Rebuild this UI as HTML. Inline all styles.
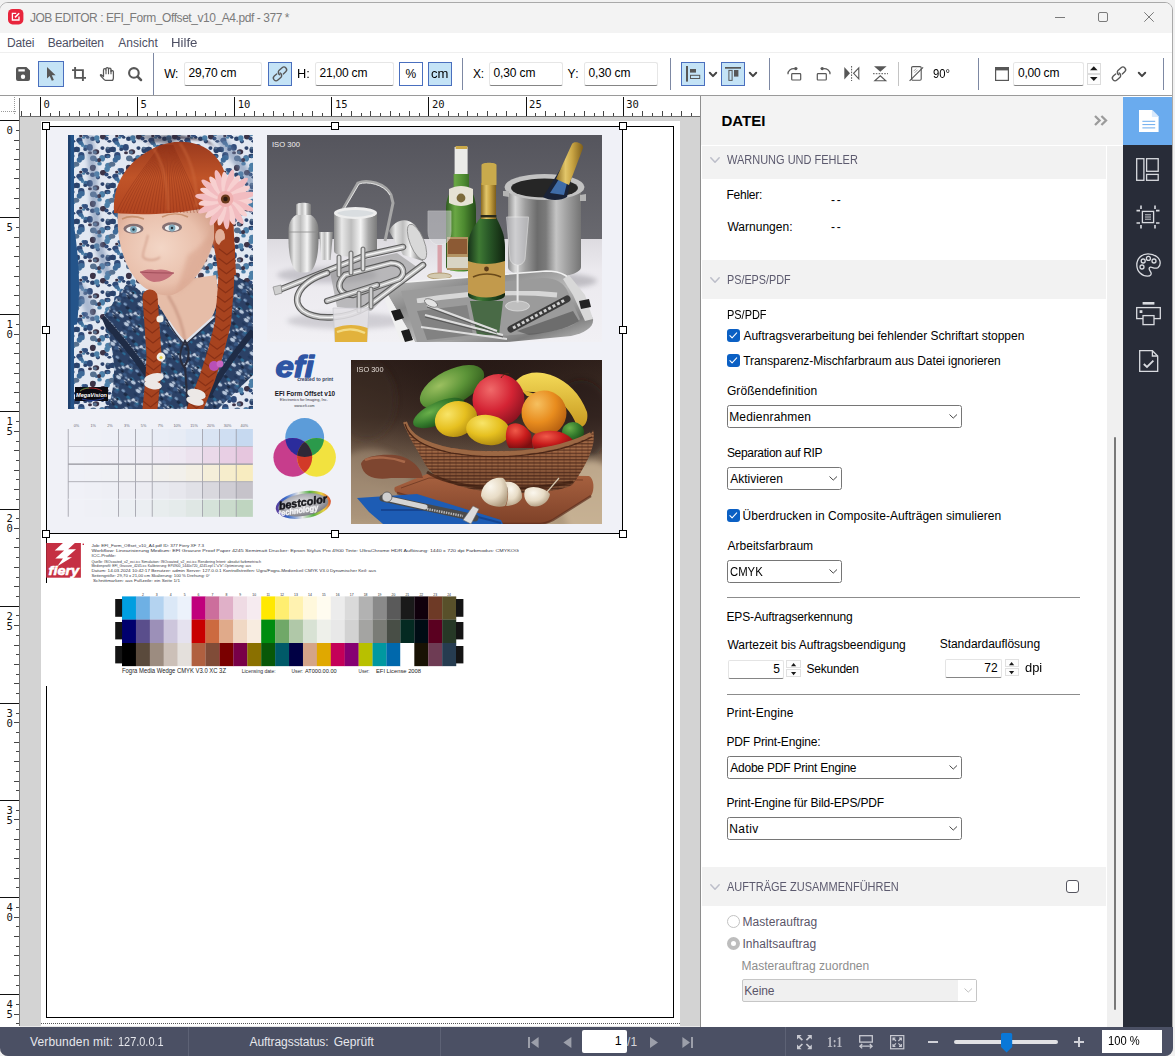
<!DOCTYPE html>
<html lang="de"><head><meta charset="utf-8"><title>JOB EDITOR : EFI_Form_Offset_v10_A4.pdf - 377 *</title>
<style>
html,body{margin:0;padding:0;overflow:hidden}
body{width:1175px;height:1056px;position:relative;overflow:hidden;background:#f1f1f1;font-family:"Liberation Sans",sans-serif;font-size:12px}
.a{position:absolute;display:block}
.t{position:absolute;white-space:pre;display:block}
svg{overflow:visible}
</style></head>
<body>
<div class="a" style="left:0px;top:0px;width:1175px;height:1056px;background:#f1f1f1;"></div>
<div class="a" style="left:-1px;top:2px;width:1173.5px;height:1054px;background:#fff;border:1px solid #a9a9a9;border-radius:9px 8px 8px 9px;box-sizing:border-box;overflow:hidden;"></div>
<div class="a" style="left:0px;top:3px;width:1171.5px;height:30px;background:#f3f3f3;border-radius:8px 7px 0 0;"></div>
<svg class="a" style="left:8.4px;top:9.2px;" width="15.4" height="15.4" viewBox="0 0 15.4 15.4"><rect x="0" y="0" width="15.4" height="15.4" rx="4.6" fill="#e8253c"/><path d="M8.2 4.4H4.4V11H11V7.4" fill="none" stroke="#fff" stroke-width="1.3"/><path d="M7 8.4L11.2 4.2" stroke="#fff" stroke-width="1.5"/></svg>
<span class="t" style="left:29.91px;top:11.84px;font-size:12px;line-height:12px;color:#7b7b7b;letter-spacing:-0.437px;">JOB EDITOR : EFI_Form_Offset_v10_A4.pdf - 377 *</span>
<div class="a" style="left:1055px;top:17px;width:10px;height:1px;background:#7a7a7a;"></div>
<div class="a" style="left:1098px;top:12px;width:10px;height:10px;border:1px solid #7a7a7a;border-radius:2px;box-sizing:border-box;"></div>
<svg class="a" style="left:1144px;top:12px;" width="10" height="10" viewBox="0 0 10 10"><path d="M0.3 0.3L9.7 9.7M9.7 0.3L0.3 9.7" stroke="#7a7a7a" stroke-width="1"/></svg>
<div class="a" style="left:0px;top:33px;width:1171.5px;height:19px;background:#fff;"></div>
<span class="t" style="left:7.02px;top:37.14px;font-size:12px;line-height:12px;color:#4d4f63;letter-spacing:-0.131px;">Datei</span>
<span class="t" style="left:47.82px;top:37.14px;font-size:12px;line-height:12px;color:#4d4f63;letter-spacing:-0.209px;">Bearbeiten</span>
<span class="t" style="left:118.18px;top:37.14px;font-size:12px;line-height:12px;color:#4d4f63;letter-spacing:0.059px;">Ansicht</span>
<span class="t" style="left:171.21px;top:37.14px;font-size:12px;line-height:12px;color:#4d4f63;transform:scaleX(1.1023);transform-origin:0 0;">Hilfe</span>
<div class="a" style="left:0px;top:52px;width:1171.5px;height:1px;background:#efefef;"></div>
<div class="a" style="left:0px;top:53px;width:1171.5px;height:42px;background:#fff;"></div>
<div class="a" style="left:0px;top:95px;width:1171.5px;height:1px;background:#9a9a9a;"></div>
<svg class="a" style="left:16px;top:67px;" width="14" height="14" viewBox="0 0 14 14"><path fill="#575757" fill-rule="evenodd" d="M2 0h8.4L14 3.4V12A2 2 0 0 1 12 14H2A2 2 0 0 1 0 12V2A2 2 0 0 1 2 0zM2.4 2.2v2.3h6.4V2.2zM7 7.5a2.2 2.2 0 1 0 0 4.4a2.2 2.2 0 0 0 0-4.4z"/></svg>
<div class="a" style="left:38px;top:61px;width:26px;height:26px;background:#c4e3f6;border:1px solid #4a6fbe;box-sizing:border-box;"></div>
<svg class="a" style="left:46.5px;top:67px;" width="9" height="14" viewBox="0 0 9 14"><path fill="#575757" d="M0 0V11.6L2.7 9L4.8 13.8L6.9 12.9L4.8 8.2H8.6Z"/></svg>
<svg class="a" style="left:72px;top:67px;" width="14" height="14" viewBox="0 0 14 14"><path d="M3.1 0V10.9H14M0 3.1H10.9V14" fill="none" stroke="#575757" stroke-width="1.9"/></svg>
<svg class="a" style="left:100px;top:67px;" width="14" height="14" viewBox="0 0 14 14"><path d="M0.9 7.5L3.5 9.6V2.9A1.25 1.25 0 0 1 6 2.9V1.8A1.25 1.25 0 0 1 8.5 1.8V2.4A1.25 1.25 0 0 1 11 2.4V4.6A1.25 1.25 0 0 1 13.4 4.6V10.4C13.4 12.4 12.8 13.4 11.8 13.4H5.6C4.8 13.4 4.3 13 3.7 12.2L0.7 8.8C0.2 8 0.4 7.5 0.9 7.5Z" fill="none" stroke="#575757" stroke-width="1.25" stroke-linejoin="round"/><path d="M6 2.9V7.2M8.5 1.8V7.2M11 2.4V7.2" stroke="#575757" stroke-width="1.1"/></svg>
<svg class="a" style="left:128px;top:67px;" width="14" height="14" viewBox="0 0 14 14"><circle cx="5.9" cy="5.9" r="4.8" fill="none" stroke="#575757" stroke-width="2.1"/><path d="M9.6 9.6L13 13" stroke="#575757" stroke-width="2.5" stroke-linecap="round"/></svg>
<div class="a" style="left:153px;top:53px;width:1px;height:42px;background:#7d88a3;"></div>
<span class="t" style="left:164.25px;top:67.64px;font-size:12px;line-height:12px;color:#000;letter-spacing:-0.405px;">W:</span>
<div class="a" style="left:183.8px;top:62px;width:78.7px;height:24px;background:#fff;border:1px solid #e6e6e6;border-bottom:1px solid #858585;border-radius:2.5px;box-sizing:border-box;"></div>
<span class="t" style="left:188.60px;top:66.64px;font-size:12px;line-height:12px;color:#000;letter-spacing:-0.224px;">29,70 cm</span>
<div class="a" style="left:268px;top:62px;width:24px;height:24px;background:#c4e3f6;border:1px solid #4a6fbe;box-sizing:border-box;"></div>
<svg class="a" style="left:273px;top:67px;" width="14" height="14" viewBox="0 0 14 14"><g fill="none" stroke="#575757" stroke-width="1.35" stroke-linecap="round"><g transform="translate(9.4 4.1) rotate(-42)"><path d="M-2.2 -2.7H2A2.7 2.7 0 0 1 2 2.7H-1.2M-4.3 1.2A2.7 2.7 0 0 1 -2.2 -2.7"/></g><g transform="translate(4.6 9.7) rotate(-42)"><path d="M2.2 2.7H-2A2.7 2.7 0 0 1 -2 -2.7H1.2M4.3 -1.2A2.7 2.7 0 0 1 2.2 2.7"/></g></g></svg>
<span class="t" style="left:296.75px;top:67.64px;font-size:12px;line-height:12px;color:#000;transform:scaleX(1.0686);transform-origin:0 0;">H:</span>
<div class="a" style="left:314.5px;top:62px;width:79px;height:24px;background:#fff;border:1px solid #e6e6e6;border-bottom:1px solid #858585;border-radius:2.5px;box-sizing:border-box;"></div>
<span class="t" style="left:319.60px;top:66.64px;font-size:12px;line-height:12px;color:#000;letter-spacing:-0.224px;">21,00 cm</span>
<div class="a" style="left:399px;top:62px;width:24px;height:24px;background:#fff;border:1px solid #4a6fbe;box-sizing:border-box;"></div>
<span class="t" style="left:405.57px;top:67.94px;font-size:12px;line-height:12px;color:#000;">%</span>
<div class="a" style="left:428px;top:62px;width:24px;height:24px;background:#c4e3f6;border:1px solid #4a6fbe;box-sizing:border-box;"></div>
<span class="t" style="left:430.95px;top:67.94px;font-size:12px;line-height:12px;color:#000;transform:scaleX(1.0885);transform-origin:0 0;">cm</span>
<div class="a" style="left:462px;top:58px;width:1px;height:32px;background:#7d88a3;"></div>
<span class="t" style="left:472.93px;top:67.64px;font-size:12px;line-height:12px;color:#000;letter-spacing:-0.179px;">X:</span>
<div class="a" style="left:488.5px;top:62px;width:74px;height:24px;background:#fff;border:1px solid #e6e6e6;border-bottom:1px solid #858585;border-radius:2.5px;box-sizing:border-box;"></div>
<span class="t" style="left:493.43px;top:66.64px;font-size:12px;line-height:12px;color:#000;letter-spacing:-0.121px;">0,30 cm</span>
<span class="t" style="left:567.54px;top:67.64px;font-size:12px;line-height:12px;color:#000;letter-spacing:0.372px;">Y:</span>
<div class="a" style="left:583.5px;top:62px;width:74px;height:24px;background:#fff;border:1px solid #e6e6e6;border-bottom:1px solid #858585;border-radius:2.5px;box-sizing:border-box;"></div>
<span class="t" style="left:588.43px;top:66.64px;font-size:12px;line-height:12px;color:#000;letter-spacing:-0.121px;">0,30 cm</span>
<div class="a" style="left:670px;top:58px;width:1px;height:32px;background:#7d88a3;"></div>
<div class="a" style="left:681px;top:62px;width:24px;height:24px;background:#c4e3f6;border:1px solid #4a6fbe;box-sizing:border-box;"></div>
<svg class="a" style="left:685px;top:65px;" width="18" height="18" viewBox="0 0 18 18"><rect x="1" y="1" width="2" height="15.6" fill="#575757"/><rect x="5" y="4" width="6" height="3.6" fill="#575757"/><rect x="5.5" y="10.3" width="9.2" height="3.2" fill="none" stroke="#575757" stroke-width="1"/></svg>
<svg class="a" style="left:709px;top:71.5px;" width="8" height="5" viewBox="0 0 8 5"><path d="M0.8 0.8 L4 4.1 L7.2 0.8" fill="none" stroke="#444" stroke-width="2" stroke-linecap="round" stroke-linejoin="round"/></svg>
<div class="a" style="left:721px;top:62px;width:24px;height:24px;background:#c4e3f6;border:1px solid #4a6fbe;box-sizing:border-box;"></div>
<svg class="a" style="left:724px;top:65px;" width="18" height="18" viewBox="0 0 18 18"><rect x="1" y="2" width="16" height="1.7" fill="#575757"/><rect x="4.9" y="5.4" width="3.2" height="10" fill="none" stroke="#575757" stroke-width="1"/><rect x="10" y="5" width="4.4" height="6.6" fill="#575757"/></svg>
<svg class="a" style="left:749px;top:71.5px;" width="8" height="5" viewBox="0 0 8 5"><path d="M0.8 0.8 L4 4.1 L7.2 0.8" fill="none" stroke="#444" stroke-width="2" stroke-linecap="round" stroke-linejoin="round"/></svg>
<div class="a" style="left:769px;top:58px;width:1px;height:32px;background:#7d88a3;"></div>
<svg class="a" style="left:786.5px;top:66px;" width="15" height="15" viewBox="0 0 15 15"><rect x="4.7" y="7.6" width="9" height="6.4" rx="0.8" fill="none" stroke="#575757" stroke-width="1.2"/><path d="M1 8.2C0.6 4.4 4 2.4 7.6 2.6" fill="none" stroke="#575757" stroke-width="1.2"/><circle cx="8.8" cy="2.6" r="1.7" fill="#575757"/></svg>
<svg class="a" style="left:815.5px;top:66px;" width="15" height="15" viewBox="0 0 15 15"><rect x="1.3" y="7.6" width="9" height="6.4" rx="0.8" fill="none" stroke="#575757" stroke-width="1.2"/><path d="M14 8.2C14.4 4.4 11 2.4 7.4 2.6" fill="none" stroke="#575757" stroke-width="1.2"/><circle cx="6.2" cy="2.6" r="1.7" fill="#575757"/></svg>
<svg class="a" style="left:844px;top:66px;" width="16" height="15" viewBox="0 0 16 15"><path d="M0.3 1V13.6L6 7.3Z" fill="#575757"/><path d="M14.8 1.8V12.8L9.6 7.3Z" fill="none" stroke="#575757" stroke-width="1.1"/><path d="M7.6 0V15" stroke="#575757" stroke-width="1" stroke-dasharray="1.6 1.2"/></svg>
<svg class="a" style="left:873px;top:65.5px;" width="15" height="16" viewBox="0 0 15 16"><path d="M1 0.3H13.6L7.3 5.8Z" fill="#575757"/><path d="M1.8 14.8H12.8L7.3 9.8Z" fill="none" stroke="#575757" stroke-width="1.1"/><path d="M0 7.7H15" stroke="#575757" stroke-width="1" stroke-dasharray="1.6 1.2"/></svg>
<div class="a" style="left:898px;top:62px;width:1px;height:24px;background:#c4c4c4;"></div>
<svg class="a" style="left:908.5px;top:66px;" width="15" height="16" viewBox="0 0 15 16"><rect x="2.6" y="0.6" width="9.6" height="13.6" rx="1.2" fill="none" stroke="#575757" stroke-width="1.1"/><path d="M0.6 14.9L14.1 1.4" stroke="#575757" stroke-width="1.2"/><path d="M4.6 5.2L7.2 2.6M5.6 6.8L8.6 3.8" stroke="#8a8a8a" stroke-width="0.8"/></svg>
<span class="t" style="left:932.57px;top:67.94px;font-size:12px;line-height:12px;color:#000;transform:scaleX(0.9364);transform-origin:0 0;">90°</span>
<div class="a" style="left:978px;top:58px;width:1px;height:32px;background:#7d88a3;"></div>
<svg class="a" style="left:995px;top:67px;" width="14" height="14" viewBox="0 0 14 14"><rect x="0.6" y="0.6" width="12.8" height="12.8" fill="none" stroke="#575757" stroke-width="1.2"/><rect x="0" y="0" width="14" height="3.4" fill="#575757"/></svg>
<div class="a" style="left:1012.5px;top:62px;width:71.5px;height:24px;background:#fff;border:1px solid #e6e6e6;border-bottom:1px solid #858585;border-radius:2.5px;box-sizing:border-box;"></div>
<span class="t" style="left:1017.93px;top:66.64px;font-size:12px;line-height:12px;color:#000;letter-spacing:-0.205px;">0,00 cm</span>
<div class="a" style="left:1086.5px;top:63px;width:14.5px;height:11px;border:1px solid #dcdcdc;box-sizing:border-box;background:#fdfdfd;"></div>
<div class="a" style="left:1086.5px;top:74px;width:14.5px;height:11px;border:1px solid #dcdcdc;box-sizing:border-box;background:#fdfdfd;"></div>
<svg class="a" style="left:1090px;top:66.3px;" width="7.6" height="4.2" viewBox="0 0 7.6 4.2"><path d="M0 4.2L3.8 0.2L7.6 4.2Z" fill="#1a1a1a"/></svg>
<svg class="a" style="left:1090px;top:77.3px;" width="7.6" height="4.2" viewBox="0 0 7.6 4.2"><path d="M0 0L3.8 4L7.6 0Z" fill="#1a1a1a"/></svg>
<svg class="a" style="left:1112px;top:67px;" width="14" height="14" viewBox="0 0 14 14"><g fill="none" stroke="#575757" stroke-width="1.35" stroke-linecap="round"><g transform="translate(9.4 4.1) rotate(-42)"><path d="M-2.2 -2.7H2A2.7 2.7 0 0 1 2 2.7H-1.2M-4.3 1.2A2.7 2.7 0 0 1 -2.2 -2.7"/></g><g transform="translate(4.6 9.7) rotate(-42)"><path d="M2.2 2.7H-2A2.7 2.7 0 0 1 -2 -2.7H1.2M4.3 -1.2A2.7 2.7 0 0 1 2.2 2.7"/></g></g></svg>
<svg class="a" style="left:1138px;top:71.5px;" width="8" height="5" viewBox="0 0 8 5"><path d="M0.8 0.8 L4 4.1 L7.2 0.8" fill="none" stroke="#444" stroke-width="2" stroke-linecap="round" stroke-linejoin="round"/></svg>
<div class="a" style="left:1163px;top:58px;width:1px;height:32px;background:#7d88a3;"></div>
<div class="a" style="left:0px;top:96px;width:700px;height:20px;background:#fff;"></div>
<div class="a" style="left:0px;top:117px;width:19px;height:910px;background:#fff;"></div>
<svg class="a" style="left:0;top:96px" width="700" height="22" viewBox="0 96 700 22" shape-rendering="crispEdges"><rect x="20" y="116" width="680" height="1" fill="#6e6e6e"/><rect x="19" y="98" width="1" height="19" fill="#747474"/><path d="M0.5 111.5H17M14.5 97V114" stroke="#9a9a9a" stroke-width="1" stroke-dasharray="1 1" fill="none"/><rect x="21" y="111" width="1" height="5" fill="#444"/><rect x="30" y="113" width="1" height="3" fill="#444"/><rect x="40" y="97" width="1" height="19" fill="#111"/><rect x="50" y="113" width="1" height="3" fill="#444"/><rect x="59" y="111" width="1" height="5" fill="#444"/><rect x="69" y="113" width="1" height="3" fill="#444"/><rect x="79" y="111" width="1" height="5" fill="#444"/><rect x="89" y="113" width="1" height="3" fill="#444"/><rect x="98" y="111" width="1" height="5" fill="#444"/><rect x="108" y="113" width="1" height="3" fill="#444"/><rect x="118" y="111" width="1" height="5" fill="#444"/><rect x="127" y="113" width="1" height="3" fill="#444"/><rect x="137" y="97" width="1" height="19" fill="#111"/><rect x="147" y="113" width="1" height="3" fill="#444"/><rect x="157" y="111" width="1" height="5" fill="#444"/><rect x="166" y="113" width="1" height="3" fill="#444"/><rect x="176" y="111" width="1" height="5" fill="#444"/><rect x="186" y="113" width="1" height="3" fill="#444"/><rect x="195" y="111" width="1" height="5" fill="#444"/><rect x="205" y="113" width="1" height="3" fill="#444"/><rect x="215" y="111" width="1" height="5" fill="#444"/><rect x="225" y="113" width="1" height="3" fill="#444"/><rect x="234" y="97" width="1" height="19" fill="#111"/><rect x="244" y="113" width="1" height="3" fill="#444"/><rect x="254" y="111" width="1" height="5" fill="#444"/><rect x="263" y="113" width="1" height="3" fill="#444"/><rect x="273" y="111" width="1" height="5" fill="#444"/><rect x="283" y="113" width="1" height="3" fill="#444"/><rect x="293" y="111" width="1" height="5" fill="#444"/><rect x="302" y="113" width="1" height="3" fill="#444"/><rect x="312" y="111" width="1" height="5" fill="#444"/><rect x="322" y="113" width="1" height="3" fill="#444"/><rect x="331" y="97" width="1" height="19" fill="#111"/><rect x="341" y="113" width="1" height="3" fill="#444"/><rect x="351" y="111" width="1" height="5" fill="#444"/><rect x="361" y="113" width="1" height="3" fill="#444"/><rect x="370" y="111" width="1" height="5" fill="#444"/><rect x="380" y="113" width="1" height="3" fill="#444"/><rect x="390" y="111" width="1" height="5" fill="#444"/><rect x="399" y="113" width="1" height="3" fill="#444"/><rect x="409" y="111" width="1" height="5" fill="#444"/><rect x="419" y="113" width="1" height="3" fill="#444"/><rect x="428" y="97" width="1" height="19" fill="#111"/><rect x="438" y="113" width="1" height="3" fill="#444"/><rect x="448" y="111" width="1" height="5" fill="#444"/><rect x="458" y="113" width="1" height="3" fill="#444"/><rect x="467" y="111" width="1" height="5" fill="#444"/><rect x="477" y="113" width="1" height="3" fill="#444"/><rect x="487" y="111" width="1" height="5" fill="#444"/><rect x="496" y="113" width="1" height="3" fill="#444"/><rect x="506" y="111" width="1" height="5" fill="#444"/><rect x="516" y="113" width="1" height="3" fill="#444"/><rect x="526" y="97" width="1" height="19" fill="#111"/><rect x="535" y="113" width="1" height="3" fill="#444"/><rect x="545" y="111" width="1" height="5" fill="#444"/><rect x="555" y="113" width="1" height="3" fill="#444"/><rect x="564" y="111" width="1" height="5" fill="#444"/><rect x="574" y="113" width="1" height="3" fill="#444"/><rect x="584" y="111" width="1" height="5" fill="#444"/><rect x="594" y="113" width="1" height="3" fill="#444"/><rect x="603" y="111" width="1" height="5" fill="#444"/><rect x="613" y="113" width="1" height="3" fill="#444"/><rect x="623" y="97" width="1" height="19" fill="#111"/><rect x="632" y="113" width="1" height="3" fill="#444"/><rect x="642" y="111" width="1" height="5" fill="#444"/><rect x="652" y="113" width="1" height="3" fill="#444"/><rect x="662" y="111" width="1" height="5" fill="#444"/><rect x="671" y="113" width="1" height="3" fill="#444"/><rect x="681" y="111" width="1" height="5" fill="#444"/><rect x="691" y="113" width="1" height="3" fill="#444"/></svg>
<span class="t" style="left:43.50px;top:98.61px;font-size:10.5px;line-height:10.5px;color:#111;font-family:'DejaVu Sans Mono','Liberation Mono',monospace;">0</span>
<span class="t" style="left:140.62px;top:98.61px;font-size:10.5px;line-height:10.5px;color:#111;font-family:'DejaVu Sans Mono','Liberation Mono',monospace;">5</span>
<span class="t" style="left:237.75px;top:98.61px;font-size:10.5px;line-height:10.5px;color:#111;font-family:'DejaVu Sans Mono','Liberation Mono',monospace;">10</span>
<span class="t" style="left:334.88px;top:98.61px;font-size:10.5px;line-height:10.5px;color:#111;font-family:'DejaVu Sans Mono','Liberation Mono',monospace;">15</span>
<span class="t" style="left:432.00px;top:98.61px;font-size:10.5px;line-height:10.5px;color:#111;font-family:'DejaVu Sans Mono','Liberation Mono',monospace;">20</span>
<span class="t" style="left:529.12px;top:98.61px;font-size:10.5px;line-height:10.5px;color:#111;font-family:'DejaVu Sans Mono','Liberation Mono',monospace;">25</span>
<span class="t" style="left:626.25px;top:98.61px;font-size:10.5px;line-height:10.5px;color:#111;font-family:'DejaVu Sans Mono','Liberation Mono',monospace;">30</span>
<svg class="a" style="left:0;top:117px" width="21" height="909" viewBox="0 117 21 909" shape-rendering="crispEdges"><rect x="19" y="117" width="1" height="909" fill="#747474"/><rect x="0" y="120" width="19" height="1" fill="#111"/><rect x="16" y="130" width="3" height="1" fill="#444"/><rect x="14" y="140" width="5" height="1" fill="#444"/><rect x="16" y="149" width="3" height="1" fill="#444"/><rect x="14" y="159" width="5" height="1" fill="#444"/><rect x="16" y="169" width="3" height="1" fill="#444"/><rect x="14" y="178" width="5" height="1" fill="#444"/><rect x="16" y="188" width="3" height="1" fill="#444"/><rect x="14" y="198" width="5" height="1" fill="#444"/><rect x="16" y="208" width="3" height="1" fill="#444"/><rect x="0" y="217" width="19" height="1" fill="#111"/><rect x="16" y="227" width="3" height="1" fill="#444"/><rect x="14" y="237" width="5" height="1" fill="#444"/><rect x="16" y="246" width="3" height="1" fill="#444"/><rect x="14" y="256" width="5" height="1" fill="#444"/><rect x="16" y="266" width="3" height="1" fill="#444"/><rect x="14" y="276" width="5" height="1" fill="#444"/><rect x="16" y="285" width="3" height="1" fill="#444"/><rect x="14" y="295" width="5" height="1" fill="#444"/><rect x="16" y="305" width="3" height="1" fill="#444"/><rect x="0" y="314" width="19" height="1" fill="#111"/><rect x="16" y="324" width="3" height="1" fill="#444"/><rect x="14" y="334" width="5" height="1" fill="#444"/><rect x="16" y="343" width="3" height="1" fill="#444"/><rect x="14" y="353" width="5" height="1" fill="#444"/><rect x="16" y="363" width="3" height="1" fill="#444"/><rect x="14" y="373" width="5" height="1" fill="#444"/><rect x="16" y="382" width="3" height="1" fill="#444"/><rect x="14" y="392" width="5" height="1" fill="#444"/><rect x="16" y="402" width="3" height="1" fill="#444"/><rect x="0" y="411" width="19" height="1" fill="#111"/><rect x="16" y="421" width="3" height="1" fill="#444"/><rect x="14" y="431" width="5" height="1" fill="#444"/><rect x="16" y="441" width="3" height="1" fill="#444"/><rect x="14" y="450" width="5" height="1" fill="#444"/><rect x="16" y="460" width="3" height="1" fill="#444"/><rect x="14" y="470" width="5" height="1" fill="#444"/><rect x="16" y="479" width="3" height="1" fill="#444"/><rect x="14" y="489" width="5" height="1" fill="#444"/><rect x="16" y="499" width="3" height="1" fill="#444"/><rect x="0" y="509" width="19" height="1" fill="#111"/><rect x="16" y="518" width="3" height="1" fill="#444"/><rect x="14" y="528" width="5" height="1" fill="#444"/><rect x="16" y="538" width="3" height="1" fill="#444"/><rect x="14" y="547" width="5" height="1" fill="#444"/><rect x="16" y="557" width="3" height="1" fill="#444"/><rect x="14" y="567" width="5" height="1" fill="#444"/><rect x="16" y="577" width="3" height="1" fill="#444"/><rect x="14" y="586" width="5" height="1" fill="#444"/><rect x="16" y="596" width="3" height="1" fill="#444"/><rect x="0" y="606" width="19" height="1" fill="#111"/><rect x="16" y="615" width="3" height="1" fill="#444"/><rect x="14" y="625" width="5" height="1" fill="#444"/><rect x="16" y="635" width="3" height="1" fill="#444"/><rect x="14" y="645" width="5" height="1" fill="#444"/><rect x="16" y="654" width="3" height="1" fill="#444"/><rect x="14" y="664" width="5" height="1" fill="#444"/><rect x="16" y="674" width="3" height="1" fill="#444"/><rect x="14" y="683" width="5" height="1" fill="#444"/><rect x="16" y="693" width="3" height="1" fill="#444"/><rect x="0" y="703" width="19" height="1" fill="#111"/><rect x="16" y="713" width="3" height="1" fill="#444"/><rect x="14" y="722" width="5" height="1" fill="#444"/><rect x="16" y="732" width="3" height="1" fill="#444"/><rect x="14" y="742" width="5" height="1" fill="#444"/><rect x="16" y="751" width="3" height="1" fill="#444"/><rect x="14" y="761" width="5" height="1" fill="#444"/><rect x="16" y="771" width="3" height="1" fill="#444"/><rect x="14" y="781" width="5" height="1" fill="#444"/><rect x="16" y="790" width="3" height="1" fill="#444"/><rect x="0" y="800" width="19" height="1" fill="#111"/><rect x="16" y="810" width="3" height="1" fill="#444"/><rect x="14" y="819" width="5" height="1" fill="#444"/><rect x="16" y="829" width="3" height="1" fill="#444"/><rect x="14" y="839" width="5" height="1" fill="#444"/><rect x="16" y="849" width="3" height="1" fill="#444"/><rect x="14" y="858" width="5" height="1" fill="#444"/><rect x="16" y="868" width="3" height="1" fill="#444"/><rect x="14" y="878" width="5" height="1" fill="#444"/><rect x="16" y="887" width="3" height="1" fill="#444"/><rect x="0" y="897" width="19" height="1" fill="#111"/><rect x="16" y="907" width="3" height="1" fill="#444"/><rect x="14" y="917" width="5" height="1" fill="#444"/><rect x="16" y="926" width="3" height="1" fill="#444"/><rect x="14" y="936" width="5" height="1" fill="#444"/><rect x="16" y="946" width="3" height="1" fill="#444"/><rect x="14" y="955" width="5" height="1" fill="#444"/><rect x="16" y="965" width="3" height="1" fill="#444"/><rect x="14" y="975" width="5" height="1" fill="#444"/><rect x="16" y="985" width="3" height="1" fill="#444"/><rect x="0" y="994" width="19" height="1" fill="#111"/><rect x="16" y="1004" width="3" height="1" fill="#444"/><rect x="14" y="1014" width="5" height="1" fill="#444"/><rect x="16" y="1023" width="3" height="1" fill="#444"/></svg>
<span class="t" style="left:6.60px;top:125.11px;font-size:10.5px;line-height:10.5px;color:#111;font-family:'DejaVu Sans Mono','Liberation Mono',monospace;">0</span>
<span class="t" style="left:6.60px;top:222.11px;font-size:10.5px;line-height:10.5px;color:#111;font-family:'DejaVu Sans Mono','Liberation Mono',monospace;">5</span>
<span class="t" style="left:6.60px;top:319.11px;font-size:10.5px;line-height:10.5px;color:#111;font-family:'DejaVu Sans Mono','Liberation Mono',monospace;">1</span>
<span class="t" style="left:6.60px;top:329.11px;font-size:10.5px;line-height:10.5px;color:#111;font-family:'DejaVu Sans Mono','Liberation Mono',monospace;">0</span>
<span class="t" style="left:6.60px;top:416.11px;font-size:10.5px;line-height:10.5px;color:#111;font-family:'DejaVu Sans Mono','Liberation Mono',monospace;">1</span>
<span class="t" style="left:6.60px;top:426.11px;font-size:10.5px;line-height:10.5px;color:#111;font-family:'DejaVu Sans Mono','Liberation Mono',monospace;">5</span>
<span class="t" style="left:6.60px;top:513.11px;font-size:10.5px;line-height:10.5px;color:#111;font-family:'DejaVu Sans Mono','Liberation Mono',monospace;">2</span>
<span class="t" style="left:6.60px;top:523.11px;font-size:10.5px;line-height:10.5px;color:#111;font-family:'DejaVu Sans Mono','Liberation Mono',monospace;">0</span>
<span class="t" style="left:6.60px;top:611.11px;font-size:10.5px;line-height:10.5px;color:#111;font-family:'DejaVu Sans Mono','Liberation Mono',monospace;">2</span>
<span class="t" style="left:6.60px;top:621.11px;font-size:10.5px;line-height:10.5px;color:#111;font-family:'DejaVu Sans Mono','Liberation Mono',monospace;">5</span>
<span class="t" style="left:6.60px;top:708.11px;font-size:10.5px;line-height:10.5px;color:#111;font-family:'DejaVu Sans Mono','Liberation Mono',monospace;">3</span>
<span class="t" style="left:6.60px;top:718.11px;font-size:10.5px;line-height:10.5px;color:#111;font-family:'DejaVu Sans Mono','Liberation Mono',monospace;">0</span>
<span class="t" style="left:6.60px;top:805.11px;font-size:10.5px;line-height:10.5px;color:#111;font-family:'DejaVu Sans Mono','Liberation Mono',monospace;">3</span>
<span class="t" style="left:6.60px;top:815.11px;font-size:10.5px;line-height:10.5px;color:#111;font-family:'DejaVu Sans Mono','Liberation Mono',monospace;">5</span>
<span class="t" style="left:6.60px;top:902.11px;font-size:10.5px;line-height:10.5px;color:#111;font-family:'DejaVu Sans Mono','Liberation Mono',monospace;">4</span>
<span class="t" style="left:6.60px;top:912.11px;font-size:10.5px;line-height:10.5px;color:#111;font-family:'DejaVu Sans Mono','Liberation Mono',monospace;">0</span>
<span class="t" style="left:6.60px;top:999.11px;font-size:10.5px;line-height:10.5px;color:#111;font-family:'DejaVu Sans Mono','Liberation Mono',monospace;">4</span>
<span class="t" style="left:6.60px;top:1009.11px;font-size:10.5px;line-height:10.5px;color:#111;font-family:'DejaVu Sans Mono','Liberation Mono',monospace;">5</span>
<div class="a" style="left:20px;top:117px;width:680px;height:909px;background:#d3d3d3;"></div>
<div class="a" style="left:41px;top:121px;width:638.5px;height:905px;background:#fff;"></div>
<div class="a" style="left:41px;top:1023px;width:638.5px;height:1px;background:repeating-linear-gradient(90deg,#555 0 1px,#fff 1px 2px);"></div>
<div class="a" style="left:20px;top:1025.5px;width:680px;height:1px;background:#e8e8e8;"></div>
<div class="a" style="left:46px;top:126px;width:628px;height:1px;background:#000;"></div>
<div class="a" style="left:673px;top:126px;width:1px;height:892px;background:#000;"></div>
<div class="a" style="left:46px;top:1017px;width:628px;height:1px;background:#000;"></div>
<div class="a" style="left:46px;top:126px;width:1px;height:892px;background:#000;"></div>
<div class="a" style="left:41px;top:583px;width:440px;height:103px;background:#fff;"></div>
<div class="a" style="left:47px;top:127px;width:576px;height:407px;background:#f0f1f7;"></div>
<svg class="a" style="left:68px;top:135px" width="185" height="274" viewBox="0 0 185 274"><defs><pattern id="wfl" width="36" height="36" patternUnits="userSpaceOnUse"><rect width="36" height="36" fill="#e2e8f2"/><ellipse cx="11.7" cy="5.4" rx="2.7" ry="2.8" fill="#34507f"/><ellipse cx="3.4" cy="21.0" rx="3.1" ry="2.2" fill="#2b426b"/><ellipse cx="15.6" cy="2.5" rx="1.8" ry="1.3" fill="#4c7fa8"/><ellipse cx="15.6" cy="38.5" rx="1.8" ry="1.6" fill="#4c7fa8"/><ellipse cx="34.1" cy="22.7" rx="2.6" ry="2.4" fill="#34507f"/><ellipse cx="-1.9" cy="22.7" rx="2.6" ry="2.2" fill="#34507f"/><ellipse cx="35.1" cy="1.7" rx="3.1" ry="2.7" fill="#3c3347"/><ellipse cx="35.1" cy="37.7" rx="3.1" ry="2.8" fill="#3c3347"/><ellipse cx="-0.9" cy="1.7" rx="3.1" ry="2.8" fill="#3c3347"/><ellipse cx="-0.9" cy="37.7" rx="3.1" ry="2.8" fill="#3c3347"/><ellipse cx="24.6" cy="3.7" rx="2.6" ry="2.2" fill="#2b426b"/><ellipse cx="19.7" cy="2.3" rx="1.7" ry="1.5" fill="#2b426b"/><ellipse cx="19.7" cy="38.3" rx="1.7" ry="1.6" fill="#2b426b"/><ellipse cx="28.0" cy="16.8" rx="3.2" ry="2.6" fill="#3c3347"/><ellipse cx="28.6" cy="25.2" rx="2.0" ry="1.7" fill="#3d6a98"/><ellipse cx="17.8" cy="12.4" rx="2.4" ry="2.6" fill="#3d6a98"/><ellipse cx="4.3" cy="15.1" rx="2.9" ry="3.1" fill="#2b426b"/><ellipse cx="15.2" cy="34.6" rx="1.7" ry="1.6" fill="#3d6a98"/><ellipse cx="15.2" cy="-1.4" rx="1.7" ry="1.8" fill="#3d6a98"/><ellipse cx="11.3" cy="25.0" rx="2.6" ry="2.7" fill="#3d6a98"/><ellipse cx="2.5" cy="3.4" rx="2.1" ry="2.0" fill="#2f4a78"/><ellipse cx="38.5" cy="3.4" rx="2.1" ry="1.5" fill="#2f4a78"/><ellipse cx="25.3" cy="23.3" rx="3.3" ry="2.9" fill="#56708f"/><ellipse cx="25.8" cy="31.9" rx="2.2" ry="1.8" fill="#4c7fa8"/><ellipse cx="22.0" cy="17.8" rx="2.0" ry="1.5" fill="#3c3347"/><ellipse cx="8.9" cy="14.1" rx="3.1" ry="2.4" fill="#34507f"/><ellipse cx="14.5" cy="10.0" rx="1.8" ry="1.9" fill="#4c7fa8"/><ellipse cx="10.0" cy="15.0" rx="2.2" ry="2.4" fill="#4c7fa8"/><ellipse cx="5.4" cy="6.3" rx="2.0" ry="1.4" fill="#2b426b"/><ellipse cx="29.9" cy="6.6" rx="2.1" ry="1.8" fill="#2b426b"/><ellipse cx="13.3" cy="20.4" rx="3.2" ry="3.4" fill="#2f4a78"/><ellipse cx="34.2" cy="23.6" rx="2.9" ry="3.0" fill="#4c7fa8"/><ellipse cx="-1.8" cy="23.6" rx="2.9" ry="2.9" fill="#4c7fa8"/><ellipse cx="31.5" cy="28.7" rx="2.3" ry="1.9" fill="#4c7fa8"/><ellipse cx="17.3" cy="14.4" rx="1.9" ry="1.7" fill="#2b426b"/><ellipse cx="4.0" cy="21.6" rx="1.8" ry="1.3" fill="#3d6a98"/><ellipse cx="3.7" cy="13.1" rx="1.6" ry="1.3" fill="#56708f"/><ellipse cx="13.5" cy="22.8" rx="3.2" ry="2.7" fill="#3d6a98"/><ellipse cx="4.4" cy="30.6" rx="3.3" ry="2.9" fill="#4c7fa8"/><ellipse cx="11.2" cy="5.2" rx="2.9" ry="2.3" fill="#2f4a78"/><ellipse cx="29.8" cy="5.8" rx="1.6" ry="1.4" fill="#3d6a98"/><ellipse cx="24.8" cy="32.9" rx="2.9" ry="3.2" fill="#3c3347"/><ellipse cx="31.1" cy="25.1" rx="2.0" ry="2.2" fill="#3c3347"/><ellipse cx="12.8" cy="8.0" rx="2.5" ry="2.1" fill="#3d6a98"/><ellipse cx="8.0" cy="29.2" rx="3.3" ry="2.5" fill="#56708f"/><ellipse cx="8.6" cy="14.4" rx="3.0" ry="2.7" fill="#2b426b"/><ellipse cx="12.8" cy="1.0" rx="1.6" ry="1.5" fill="#3c3347"/><ellipse cx="12.8" cy="37.0" rx="1.6" ry="1.3" fill="#3c3347"/><ellipse cx="21.8" cy="12.4" rx="3.0" ry="3.3" fill="#2f4a78"/><ellipse cx="34.4" cy="13.1" rx="2.0" ry="1.8" fill="#2b426b"/><ellipse cx="-1.6" cy="13.1" rx="2.0" ry="1.6" fill="#2b426b"/><ellipse cx="17.4" cy="35.5" rx="2.6" ry="2.4" fill="#34507f"/><ellipse cx="17.4" cy="-0.5" rx="2.6" ry="2.5" fill="#34507f"/><ellipse cx="28.8" cy="3.1" rx="2.7" ry="2.8" fill="#4c7fa8"/><ellipse cx="27.0" cy="17.2" rx="1.9" ry="1.8" fill="#56708f"/><ellipse cx="3.1" cy="34.1" rx="2.8" ry="2.4" fill="#4c7fa8"/><ellipse cx="3.1" cy="-1.9" rx="2.8" ry="3.0" fill="#4c7fa8"/></pattern><pattern id="wbl" width="24" height="24" patternUnits="userSpaceOnUse" patternTransform="rotate(35)"><rect width="24" height="24" fill="#2b4166"/><ellipse cx="17.4" cy="4.1" rx="1.5" ry="0.9" fill="#3a5a86"/><ellipse cx="14.2" cy="11.2" rx="2.3" ry="1.4" fill="#c9d4e4"/><ellipse cx="15.8" cy="8.4" rx="2.2" ry="1.3" fill="#3a5a86"/><ellipse cx="0.5" cy="19.2" rx="2.4" ry="1.5" fill="#2a6a94"/><ellipse cx="24.5" cy="19.2" rx="2.4" ry="1.5" fill="#2a6a94"/><ellipse cx="12.6" cy="22.4" rx="2.0" ry="1.2" fill="#b9c8dc"/><ellipse cx="12.6" cy="-1.6" rx="2.0" ry="1.2" fill="#b9c8dc"/><ellipse cx="19.8" cy="5.1" rx="1.7" ry="1.0" fill="#22385c"/><ellipse cx="12.0" cy="18.3" rx="1.8" ry="1.1" fill="#18243c"/><ellipse cx="20.0" cy="1.5" rx="2.5" ry="1.5" fill="#c9d4e4"/><ellipse cx="20.0" cy="25.5" rx="2.5" ry="1.5" fill="#c9d4e4"/><ellipse cx="15.9" cy="19.6" rx="2.1" ry="1.3" fill="#3a5a86"/><ellipse cx="12.8" cy="12.6" rx="1.3" ry="0.8" fill="#c9d4e4"/><ellipse cx="18.6" cy="14.6" rx="2.5" ry="1.5" fill="#3a5a86"/><ellipse cx="4.1" cy="11.4" rx="2.4" ry="1.5" fill="#1c2a44"/><ellipse cx="7.8" cy="12.4" rx="2.2" ry="1.3" fill="#2a6a94"/><ellipse cx="21.2" cy="1.4" rx="1.6" ry="1.0" fill="#1c2a44"/><ellipse cx="21.2" cy="25.4" rx="1.6" ry="1.0" fill="#1c2a44"/><ellipse cx="-2.8" cy="1.4" rx="1.6" ry="1.0" fill="#1c2a44"/><ellipse cx="-2.8" cy="25.4" rx="1.6" ry="1.0" fill="#1c2a44"/><ellipse cx="18.5" cy="12.2" rx="2.2" ry="1.3" fill="#2a6a94"/><ellipse cx="10.6" cy="14.7" rx="2.1" ry="1.3" fill="#b9c8dc"/><ellipse cx="16.6" cy="10.9" rx="2.1" ry="1.3" fill="#c9d4e4"/><ellipse cx="12.2" cy="5.9" rx="2.1" ry="1.3" fill="#22385c"/><ellipse cx="22.1" cy="21.4" rx="1.6" ry="1.0" fill="#c9d4e4"/><ellipse cx="22.1" cy="-2.6" rx="1.6" ry="1.0" fill="#c9d4e4"/><ellipse cx="-1.9" cy="21.4" rx="1.6" ry="1.0" fill="#c9d4e4"/><ellipse cx="-1.9" cy="-2.6" rx="1.6" ry="1.0" fill="#c9d4e4"/><ellipse cx="3.3" cy="2.9" rx="2.0" ry="1.2" fill="#2a6a94"/><ellipse cx="3.3" cy="26.9" rx="2.0" ry="1.2" fill="#2a6a94"/><ellipse cx="16.1" cy="10.3" rx="1.6" ry="1.0" fill="#22385c"/><ellipse cx="18.8" cy="21.5" rx="1.5" ry="0.9" fill="#7f9cc0"/><ellipse cx="18.8" cy="-2.5" rx="1.5" ry="0.9" fill="#7f9cc0"/><ellipse cx="3.4" cy="21.2" rx="2.8" ry="1.7" fill="#b9c8dc"/><ellipse cx="3.4" cy="-2.8" rx="2.8" ry="1.7" fill="#b9c8dc"/><ellipse cx="17.9" cy="2.3" rx="2.7" ry="1.6" fill="#3a5a86"/><ellipse cx="17.9" cy="26.3" rx="2.7" ry="1.6" fill="#3a5a86"/><ellipse cx="23.8" cy="20.0" rx="1.6" ry="1.0" fill="#18243c"/><ellipse cx="-0.2" cy="20.0" rx="1.6" ry="1.0" fill="#18243c"/><ellipse cx="23.9" cy="9.7" rx="2.0" ry="1.2" fill="#7f9cc0"/><ellipse cx="-0.1" cy="9.7" rx="2.0" ry="1.2" fill="#7f9cc0"/><ellipse cx="7.6" cy="17.3" rx="1.3" ry="0.8" fill="#c9d4e4"/><ellipse cx="10.6" cy="0.4" rx="1.8" ry="1.1" fill="#22385c"/><ellipse cx="10.6" cy="24.4" rx="1.8" ry="1.1" fill="#22385c"/><ellipse cx="12.3" cy="1.5" rx="2.8" ry="1.7" fill="#b9c8dc"/><ellipse cx="12.3" cy="25.5" rx="2.8" ry="1.7" fill="#b9c8dc"/><ellipse cx="23.3" cy="2.5" rx="1.7" ry="1.1" fill="#1c2a44"/><ellipse cx="23.3" cy="26.5" rx="1.7" ry="1.1" fill="#1c2a44"/><ellipse cx="-0.7" cy="2.5" rx="1.7" ry="1.1" fill="#1c2a44"/><ellipse cx="-0.7" cy="26.5" rx="1.7" ry="1.1" fill="#1c2a44"/></pattern><linearGradient id="whair" x1="0" y1="0" x2="0" y2="1"><stop offset="0" stop-color="#9a3a1e"/><stop offset="0.5" stop-color="#c05428"/><stop offset="1" stop-color="#b04420"/></linearGradient><radialGradient id="wface" cx="0.45" cy="0.45" r="0.6"><stop offset="0" stop-color="#f3d6c6"/><stop offset="0.7" stop-color="#e9c0ac"/><stop offset="1" stop-color="#d8a690"/></radialGradient><filter id="wb1" x="-20%" y="-20%" width="140%" height="140%"><feGaussianBlur stdDeviation="0.8"/></filter><filter id="wb2" x="-20%" y="-20%" width="140%" height="140%"><feGaussianBlur stdDeviation="2"/></filter><clipPath id="wclip"><rect width="185" height="274"/></clipPath></defs><g clip-path="url(#wclip)"><rect width="185" height="274" fill="url(#wfl)"/><g filter="url(#wb2)" opacity="0.55"><path d="M20 0C30 40 20 90 40 140" stroke="#6c83a8" stroke-width="8" fill="none"/><path d="M150 0C170 30 185 40 185 60" stroke="#6c83a8" stroke-width="9" fill="none"/><path d="M60 0L120 0L100 10Z" fill="#2c2a3c"/><path d="M10 150C30 180 30 230 20 274" stroke="#7d93b6" stroke-width="10" fill="none"/></g><path d="M0 0H6V90C10 120 14 150 8 200L6 274H0Z" fill="#24548a"/><path d="M0 0H2.5V274H0Z" fill="#1d3f6c"/><path d="M78 10C100 -2 130 -2 150 14L140 6L100 2Z" fill="#2e2838" filter="url(#wb1)"/><path d="M132 20C150 30 166 60 166 100L168 140L150 140C148 110 140 90 132 76Z" fill="#a5401e"/><path d="M58 150C70 150 76 158 78 172L185 150V274H40L36 250C50 230 40 200 34 184Z" fill="url(#wbl)"/><path d="M166 140L185 150V274H130C150 240 160 200 166 140Z" fill="url(#wbl)"/><path d="M34 183C50 200 70 225 80 240" stroke="#1f2c46" stroke-width="7" fill="none"/><path d="M185 196C170 215 150 240 140 262" stroke="#1f2c46" stroke-width="6" fill="none"/><path d="M36 180C52 197 72 222 82 237" stroke="#c3cede" stroke-width="0.8" stroke-dasharray="1 1.2" fill="none"/><path d="M6 190L34 184C44 205 52 235 40 274H6Z" fill="url(#wfl)"/><path d="M150 274L185 240V274Z" fill="url(#wfl)"/><path d="M80 150L148 140C152 160 150 175 140 188L118 210L112 205C104 190 92 175 80 150Z" fill="#e6bda8"/><path d="M100 160C112 180 116 196 117 208" stroke="#d0a08c" stroke-width="3" fill="none" filter="url(#wb1)"/><path d="M100 186C106 196 112 203 117 208L146 182" stroke="#dfe4ee" stroke-width="3" fill="none"/><path d="M98 184C105 196 111 204 117 210L147 183" stroke="#2a3146" stroke-width="1.4" fill="none"/><path d="M117 206C112 214 110 224 116 232C122 224 122 214 117 206ZM117 232L120 274" stroke="#2a2c3c" stroke-width="2.2" fill="none"/><path d="M50 76C48 100 54 125 66 142C76 156 92 162 104 160C122 154 140 130 146 104L146 74Z" fill="url(#wface)"/><ellipse cx="152" cy="102" rx="5" ry="8" fill="#e2b09a"/><path d="M120 120C134 112 142 100 146 88V106C140 128 126 148 108 158Z" fill="#d9a48e" opacity="0.6" filter="url(#wb2)"/><path d="M54 84C60 81 68 81 76 84M94 82C102 78 112 78 120 82" stroke="#c08864" stroke-width="1.6" fill="none" opacity="0.8"/><ellipse cx="65.5" cy="93.7" rx="10" ry="5" fill="#6a5a62" opacity="0.8"/><ellipse cx="65.5" cy="94.5" rx="7.2" ry="3.2" fill="#eef0f2"/><circle cx="65.5" cy="94.5" r="3.4" fill="#7fa8ba"/><circle cx="65.5" cy="94.5" r="1.2" fill="#23303a"/><ellipse cx="104" cy="92.2" rx="10" ry="5" fill="#6a5a62" opacity="0.8"/><ellipse cx="104" cy="93" rx="7.2" ry="3.2" fill="#eef0f2"/><circle cx="104" cy="93" r="3.4" fill="#7fa8ba"/><circle cx="104" cy="93" r="1.2" fill="#23303a"/><path d="M80 100C78 110 74 118 75 122C78 126 88 126 92 122" stroke="#d09c88" stroke-width="1.4" fill="none" filter="url(#wb1)"/><path d="M72 137C80 133 84 135 88 135C92 134 98 134 106 138C100 144 94 147 86 147C80 146 76 142 72 137Z" fill="#c4707a"/><path d="M72 137C82 138 96 138 106 138" stroke="#9c4a56" stroke-width="0.9" fill="none"/><path d="M46 78C44 50 58 26 88 12C104 5 126 4 142 16C156 28 162 46 160 66L132 74C100 80 70 80 46 78Z" fill="url(#whair)"/><path d="M48.0 78C61.0 50 79.2 30 92.2 10M51.4 78C63.5 50 80.6 30 92.7 10M54.8 78C66.1 50 81.9 30 93.2 10M58.2 78C68.7 50 83.3 30 93.7 10M61.6 78C71.2 50 84.6 30 94.2 10M65.0 78C73.8 50 86.0 30 94.8 10M68.4 78C76.3 50 87.4 30 95.3 10M71.8 78C78.8 50 88.7 30 95.8 10M75.2 78C81.4 50 90.1 30 96.3 10M78.6 78C83.9 50 91.4 30 96.8 10M82.0 78C86.5 50 92.8 30 97.3 10M85.4 78C89.1 50 94.2 30 97.8 10M88.8 78C91.6 50 95.5 30 98.3 10M92.2 78C94.1 50 96.9 30 98.8 10M95.6 78C96.7 50 98.2 30 99.3 10M99.0 78C99.2 50 99.6 30 99.8 10M102.4 78C101.8 50 101.0 30 100.4 10M105.8 78C104.3 50 102.3 30 100.9 10M109.2 78C106.9 50 103.7 30 101.4 10M112.6 78C109.4 50 105.0 30 101.9 10M116.0 78C112.0 50 106.4 30 102.4 10M119.4 78C114.5 50 107.8 30 102.9 10M122.8 78C117.1 50 109.1 30 103.4 10M126.2 78C119.7 50 110.5 30 103.9 10M129.6 78C122.2 50 111.8 30 104.4 10M133.0 78C124.8 50 113.2 30 105.0 10" stroke="#8a2c14" stroke-width="0.7" fill="none" opacity="0.55"/><path d="M86 14C96 30 100 50 100 76M112 8C124 26 130 50 128 72" stroke="#cf6a3c" stroke-width="2.2" fill="none" opacity="0.6" filter="url(#wb1)"/><path d="M82 162L84 190L86 220L85 244L82 274" stroke="#a7431f" stroke-width="15" fill="none" stroke-linecap="round" stroke-linejoin="round"/><path d="M74.8 163.7L82.3 169.7L89.8 163.7M75.5 173.0L83.0 179.0L90.5 173.0M76.2 182.3L83.7 188.3L91.2 182.3M76.8 192.0L84.3 198.0L91.8 192.0M77.5 202.0L85.0 208.0L92.5 202.0M78.2 212.0L85.7 218.0L93.2 212.0M78.3 221.0L85.8 227.0L93.3 221.0M78.0 229.0L85.5 235.0L93.0 229.0M77.7 237.0L85.2 243.0L92.7 237.0M77.0 246.0L84.5 252.0L92.0 246.0M76.0 256.0L83.5 262.0L91.0 256.0M75.0 266.0L82.5 272.0L90.0 266.0" stroke="#7c2a12" stroke-width="1.1" fill="none" opacity="0.7"/><path d="M159 112L158 150L155 188L148 216L139 244L127 274" stroke="#a7431f" stroke-width="16" fill="none" stroke-linecap="round" stroke-linejoin="round"/><path d="M150.9 113.8L158.9 119.8L166.9 113.8M150.6 123.2L158.6 129.2L166.6 123.2M150.4 132.8L158.4 138.8L166.4 132.8M150.1 142.2L158.1 148.2L166.1 142.2M149.6 151.8L157.6 157.8L165.6 151.8M148.9 161.2L156.9 167.2L164.9 161.2M148.1 170.8L156.1 176.8L164.1 170.8M147.4 180.2L155.4 186.2L163.4 180.2M145.8 189.7L153.8 195.7L161.8 189.7M143.5 199.0L151.5 205.0L159.5 199.0M141.2 208.3L149.2 214.3L157.2 208.3M138.5 217.7L146.5 223.7L154.5 217.7M135.5 227.0L143.5 233.0L151.5 227.0M132.5 236.3L140.5 242.3L148.5 236.3M129.5 244.8L137.5 250.8L145.5 244.8M126.5 252.2L134.5 258.2L142.5 252.2M123.5 259.8L131.5 265.8L139.5 259.8M120.5 267.2L128.5 273.2L136.5 267.2" stroke="#7c2a12" stroke-width="1.1" fill="none" opacity="0.7"/><g fill="#ece8e6"><ellipse cx="86" cy="243" rx="10" ry="4.6" transform="rotate(-12 86 243)"/><ellipse cx="85" cy="250" rx="9" ry="4.2" transform="rotate(10 85 250)"/><ellipse cx="128.5" cy="259" rx="9.5" ry="5" transform="rotate(14 128 259)"/><ellipse cx="127" cy="266" rx="9" ry="4.2" transform="rotate(14 127 266)"/></g><circle cx="93" cy="222" r="4.4" fill="#f1efe6"/><circle cx="93" cy="222.5" r="1.6" fill="#e4d04a"/><circle cx="92" cy="184" r="3.6" fill="#f1efe6"/><circle cx="146" cy="231" r="5" fill="#b84fb6"/><circle cx="152" cy="229" r="3.4" fill="#c867c4"/><ellipse cx="171.7" cy="65.4" rx="13.0" ry="3.6" transform="rotate(5.7 171.7 65.4)" fill="#f7d0d0"/><ellipse cx="172.3" cy="70.0" rx="14.5" ry="3.6" transform="rotate(22.1 172.3 70.0)" fill="#f2bcc0"/><ellipse cx="168.7" cy="72.9" rx="13.0" ry="3.6" transform="rotate(38.5 168.7 72.9)" fill="#f7d0d0"/><ellipse cx="166.7" cy="77.0" rx="14.5" ry="3.6" transform="rotate(54.8 166.7 77.0)" fill="#f2bcc0"/><ellipse cx="162.1" cy="77.5" rx="13.0" ry="3.6" transform="rotate(71.2 162.1 77.5)" fill="#f7d0d0"/><ellipse cx="158.2" cy="79.9" rx="14.5" ry="3.6" transform="rotate(87.5 158.2 79.9)" fill="#f2bcc0"/><ellipse cx="154.1" cy="77.9" rx="13.0" ry="3.6" transform="rotate(103.9 154.1 77.9)" fill="#f7d0d0"/><ellipse cx="149.5" cy="77.8" rx="14.5" ry="3.6" transform="rotate(120.3 149.5 77.8)" fill="#f2bcc0"/><ellipse cx="147.1" cy="73.8" rx="13.0" ry="3.6" transform="rotate(136.6 147.1 73.8)" fill="#f7d0d0"/><ellipse cx="143.3" cy="71.2" rx="14.5" ry="3.6" transform="rotate(153.0 143.3 71.2)" fill="#f2bcc0"/><ellipse cx="143.4" cy="66.6" rx="13.0" ry="3.6" transform="rotate(169.4 143.4 66.6)" fill="#f7d0d0"/><ellipse cx="141.6" cy="62.4" rx="14.5" ry="3.6" transform="rotate(185.7 141.6 62.4)" fill="#f2bcc0"/><ellipse cx="144.3" cy="58.6" rx="13.0" ry="3.6" transform="rotate(202.1 144.3 58.6)" fill="#f7d0d0"/><ellipse cx="145.0" cy="54.1" rx="14.5" ry="3.6" transform="rotate(218.5 145.0 54.1)" fill="#f2bcc0"/><ellipse cx="149.3" cy="52.3" rx="13.0" ry="3.6" transform="rotate(234.8 149.3 52.3)" fill="#f7d0d0"/><ellipse cx="152.4" cy="48.9" rx="14.5" ry="3.6" transform="rotate(251.2 152.4 48.9)" fill="#f2bcc0"/><ellipse cx="156.9" cy="49.7" rx="13.0" ry="3.6" transform="rotate(267.5 156.9 49.7)" fill="#f7d0d0"/><ellipse cx="161.3" cy="48.5" rx="14.5" ry="3.6" transform="rotate(283.9 161.3 48.5)" fill="#f2bcc0"/><ellipse cx="164.7" cy="51.7" rx="13.0" ry="3.6" transform="rotate(300.3 164.7 51.7)" fill="#f7d0d0"/><ellipse cx="169.1" cy="53.0" rx="14.5" ry="3.6" transform="rotate(316.6 169.1 53.0)" fill="#f2bcc0"/><ellipse cx="170.2" cy="57.5" rx="13.0" ry="3.6" transform="rotate(333.0 170.2 57.5)" fill="#f7d0d0"/><ellipse cx="173.2" cy="61.1" rx="14.5" ry="3.6" transform="rotate(349.4 173.2 61.1)" fill="#f2bcc0"/><circle cx="157.5" cy="64" r="8" fill="#f0b0b0"/><circle cx="157.5" cy="64" r="4.6" fill="#6a3a1c"/><circle cx="157.5" cy="64" r="2.2" fill="#2e1a10"/><rect x="7" y="252" width="33" height="14" fill="#0b0b12"/><path d="M12 256C18 252 28 252 34 256" stroke="#d03030" stroke-width="0.8" fill="none"/><path d="M12 256C15 253.5 18 253 21 253" stroke="#30a040" stroke-width="0.8" fill="none"/><path d="M14 264C20 266 30 266 36 263" stroke="#3050c0" stroke-width="0.8" fill="none"/><text x="23.5" y="262" font-family="'Liberation Sans',sans-serif" font-size="6.2" font-weight="bold" font-style="italic" fill="#fff" text-anchor="middle" textLength="31" lengthAdjust="spacingAndGlyphs">MegaVision</text></g></svg>
<svg class="a" style="left:267px;top:135px" width="335" height="207" viewBox="0 0 335 207"><defs><linearGradient id="sbg" x1="0" y1="0" x2="0" y2="1"><stop offset="0" stop-color="#55555d"/><stop offset="1" stop-color="#69696f"/></linearGradient><linearGradient id="stb" x1="0" y1="0" x2="0" y2="1"><stop offset="0" stop-color="#dddbe0"/><stop offset="0.3" stop-color="#ebe9ee"/><stop offset="1" stop-color="#f1f0f4"/></linearGradient><linearGradient id="scy" x1="0" y1="0" x2="1" y2="0"><stop offset="0" stop-color="#8c8c8c"/><stop offset="0.18" stop-color="#e8e8e8"/><stop offset="0.4" stop-color="#bdbdbd"/><stop offset="0.62" stop-color="#f4f4f4"/><stop offset="0.8" stop-color="#a8a8a8"/><stop offset="1" stop-color="#7a7a7a"/></linearGradient><linearGradient id="scy2" x1="0" y1="0" x2="1" y2="0"><stop offset="0" stop-color="#8a8a8a"/><stop offset="0.1" stop-color="#d8d8d8"/><stop offset="0.24" stop-color="#9c9c9c"/><stop offset="0.4" stop-color="#6c6c6c"/><stop offset="0.52" stop-color="#7a7a7a"/><stop offset="0.66" stop-color="#c4c4c4"/><stop offset="0.8" stop-color="#a2a2a2"/><stop offset="1" stop-color="#747474"/></linearGradient><linearGradient id="sgold" x1="0" y1="0" x2="1" y2="0"><stop offset="0" stop-color="#8e6e22"/><stop offset="0.35" stop-color="#e2c66a"/><stop offset="0.6" stop-color="#c9a544"/><stop offset="1" stop-color="#7e5e1a"/></linearGradient><linearGradient id="sgr1" x1="0" y1="0" x2="1" y2="0"><stop offset="0" stop-color="#2d5a1e"/><stop offset="0.3" stop-color="#6aa744"/><stop offset="0.6" stop-color="#4d8a30"/><stop offset="1" stop-color="#234a18"/></linearGradient><linearGradient id="sgr2" x1="0" y1="0" x2="1" y2="0"><stop offset="0" stop-color="#17321a"/><stop offset="0.3" stop-color="#3f7a34"/><stop offset="0.55" stop-color="#2a5a28"/><stop offset="1" stop-color="#10230f"/></linearGradient><linearGradient id="stray" x1="0" y1="0" x2="1" y2="1"><stop offset="0" stop-color="#c9c9c9"/><stop offset="0.3" stop-color="#8a8a8a"/><stop offset="0.55" stop-color="#b9b9b9"/><stop offset="0.8" stop-color="#7d7d7d"/><stop offset="1" stop-color="#c4c4c4"/></linearGradient><filter id="sb1" x="-20%" y="-20%" width="140%" height="140%"><feGaussianBlur stdDeviation="0.7"/></filter><filter id="sb2" x="-20%" y="-20%" width="140%" height="140%"><feGaussianBlur stdDeviation="2.5"/></filter><clipPath id="sclip"><rect width="335" height="207"/></clipPath></defs><g clip-path="url(#sclip)"><rect width="335" height="106" fill="url(#sbg)"/><rect y="104" width="335" height="103" fill="url(#stb)"/><g filter="url(#sb2)" opacity="0.45"><ellipse cx="60" cy="140" rx="50" ry="8" fill="#9a98a0"/><ellipse cx="280" cy="146" rx="50" ry="8" fill="#8a8890"/><ellipse cx="80" cy="186" rx="60" ry="8" fill="#aaa8b0"/></g><path d="M75 76L91 48C100 44 118 48 124 60L126 68L118 106" fill="none" stroke="#a6a6a6" stroke-width="3"/><path d="M76 76L92 49C100 46 117 49 123 60" fill="none" stroke="#e2e2e2" stroke-width="1"/><path d="M241 52V132C241 146 314 146 314 132V52Z" fill="url(#scy2)"/><ellipse cx="277.5" cy="52" rx="40" ry="13" fill="#c2c2c2"/><ellipse cx="277.5" cy="53" rx="33.5" ry="9.5" fill="#262626"/><path d="M236 56L242 56V62L236 61ZM313 60L319 59V66L313 66Z" fill="#b4b4b4"/><path d="M276 62L296 30L306 36L300 62C294 66 282 66 276 62Z" fill="#1a2338"/><path d="M283 58L292 44L300 48L297 60Z" fill="#3f6ca8"/><path d="M289 44L305 9C307 5 317 8 316 13L302 50Z" fill="url(#sgold)"/><path d="M186.6 39H202V52C206 58 209 64 209 74V132C209 138 179 138 179 132V74C179 64 182 58 186.6 52Z" fill="url(#sgr1)"/><rect x="187.6" y="12" width="13" height="27" fill="#ebebe8"/><rect x="188.6" y="11" width="11.8" height="3" fill="#caa94a"/><path d="M182 54C190 50 198 50 206 54V68C198 72 190 72 182 68Z" fill="#e6e2d4"/><circle cx="194" cy="63" r="4.4" fill="#7c6a3a"/><rect x="180" y="102" width="21" height="33" fill="#b39464"/><rect x="180" y="122" width="21" height="11" fill="#d8d4c4"/><rect x="181" y="104" width="19" height="15" fill="#8c5a34"/><path d="M161 76H184V96C184 106 178 110 172.5 110C167 110 161 106 161 96Z" fill="#d7d7db" opacity="0.55" stroke="#efefef" stroke-width="0.8"/><rect x="170.5" y="110" width="4.4" height="28" fill="#d9a2aa"/><ellipse cx="172.5" cy="141" rx="12" ry="3" fill="#d3c9b0" stroke="#a89060" stroke-width="0.8"/><path d="M121 160L128 148L279 136C296 136 303 142 309 152L326 184C327 192 318 198 304 201L240 207H148Z" fill="url(#stray)"/><path d="M134 156L276 143C290 143 296 148 300 155L313 184C308 192 290 196 270 198L160 207H150Z" fill="#9b9b9b"/><path d="M150 166C200 158 250 156 290 160" stroke="#ececec" stroke-width="5" fill="none" opacity="0.75" filter="url(#sb1)"/><path d="M250 196L306 176L312 186C300 194 280 198 262 200Z" fill="#5a5a5a" opacity="0.7" filter="url(#sb1)"/><path d="M150 176L200 170L206 200L160 205Z" fill="#6a6a6a" opacity="0.5" filter="url(#sb1)"/><path d="M128 148L279 136C296 136 303 142 309 152" stroke="#f2f2f2" stroke-width="1.6" fill="none"/><path d="M121 160L148 207H134L118 166Z" fill="#f0f0f0"/><path d="M124 176L133 174L137 183L128 186Z" fill="#1c1c1c"/><path d="M134 196L142 194L146 205L138 207Z" fill="#1c1c1c"/><path d="M302 140L318 160L326 184L318 186L306 160L296 144Z" fill="#d8d8d8"/><path d="M312 166L322 164L324 172L314 174Z" fill="#222"/><path d="M203 166H236L232 200H210Z" fill="#2e5a2a" opacity="0.75"/><path d="M160 170L230 196M158 180L236 200M154 192L240 204" stroke="#dedede" stroke-width="2.2" fill="none"/><path d="M160 172L230 198M158 182L236 202" stroke="#4a4a4a" stroke-width="0.8" fill="none"/><ellipse cx="164" cy="168" rx="7" ry="3.4" transform="rotate(25 164 168)" fill="#e4e4e4" stroke="#555" stroke-width="0.6"/><path d="M244 194L300 164" stroke="#3a3a3a" stroke-width="7" stroke-linecap="round"/><path d="M246 193L298 165" stroke="#cfcfcf" stroke-width="3" stroke-dasharray="3 2"/><path d="M214 82C206 92 201 100 201 112V160C201 168 238 168 238 160V112C238 100 234 92 229 82Z" fill="url(#sgr2)"/><rect x="214" y="48" width="15" height="36" fill="url(#sgold)"/><path d="M214.5 30C214.5 27 229.5 27 229.5 30V50H214.5Z" fill="#c9aa4c"/><rect x="213.6" y="80" width="15.8" height="2.4" fill="#2a2a1a"/><path d="M201 126C212 130 226 130 238 126V158C226 164 212 164 201 158Z" fill="#c29a4c"/><path d="M206 142C214 138 226 138 234 142" stroke="#6a4a1a" stroke-width="1.6" fill="none"/><circle cx="219.5" cy="134" r="2.4" fill="#5a3a1a"/><path d="M239.6 82H261.6L258 124C256 132 245 132 243 124Z" fill="#c9c9cd" opacity="0.6" stroke="#f2f2f2" stroke-width="0.9"/><rect x="249.6" y="130" width="2" height="38" fill="#e8e8e8"/><ellipse cx="250.5" cy="171" rx="12" ry="5" fill="#c8c8c8" opacity="0.8" stroke="#f0f0f0" stroke-width="0.8"/><path d="M67 78V116C67 124 110 124 110 116V78Z" fill="url(#scy)"/><ellipse cx="88.5" cy="78" rx="21.5" ry="6" fill="#eeeeee"/><path d="M70 78C76 74 100 74 107 78C100 83 76 83 70 78Z" fill="#d9dde0"/><path d="M29 70C29 67 44 67 44 70V80H29Z" fill="url(#scy)"/><path d="M29 80H44C50 84 51.5 90 51.5 96V104C51.5 122 48 132 44 136C40 138 32 138 29 136C25 132 21.5 122 21.5 104V96C21.5 90 23 84 29 80Z" fill="url(#scy)"/><path d="M22 97H51" stroke="#8a8a8a" stroke-width="0.8"/><path d="M52 97H66L63.6 125H54.6Z" fill="url(#scy)"/><path d="M122 96C128 84 140 82 148 90C156 100 158 116 156 126L136 120C132 112 126 104 122 96Z" fill="url(#scy)"/><ellipse cx="150" cy="107" rx="7" ry="19" transform="rotate(-22 150 107)" fill="#d8d8d8" stroke="#8a8a8a" stroke-width="0.8"/><path d="M62 132L130 118L150 132L104 176L70 172Z" fill="#8f8f8f" opacity="0.55" filter="url(#sb1)"/><path d="M12 155L100 120L136 112" stroke="#5c5c5c" stroke-width="6.6" stroke-linecap="round" fill="none"/><path d="M12 155L100 120L136 112" stroke="#bdbdbd" stroke-width="4.4" stroke-linecap="round" fill="none"/><path d="M12 155L100 120L136 112" stroke="#f4f4f4" stroke-width="1.32" stroke-linecap="round" fill="none"/><path d="M60 138C30 148 24 166 36 176C50 186 80 184 100 172L156 130" stroke="#5c5c5c" stroke-width="6.6" stroke-linecap="round" fill="none"/><path d="M60 138C30 148 24 166 36 176C50 186 80 184 100 172L156 130" stroke="#bdbdbd" stroke-width="4.4" stroke-linecap="round" fill="none"/><path d="M60 138C30 148 24 166 36 176C50 186 80 184 100 172L156 130" stroke="#f4f4f4" stroke-width="1.32" stroke-linecap="round" fill="none"/><path d="M78 140C68 150 72 160 86 160L132 144C140 138 136 128 124 128Z" stroke="#5c5c5c" stroke-width="6.4" stroke-linecap="round" fill="none"/><path d="M78 140C68 150 72 160 86 160L132 144C140 138 136 128 124 128Z" stroke="#bdbdbd" stroke-width="4.2" stroke-linecap="round" fill="none"/><path d="M78 140C68 150 72 160 86 160L132 144C140 138 136 128 124 128Z" stroke="#f4f4f4" stroke-width="1.26" stroke-linecap="round" fill="none"/><path d="M60 166L110 150" stroke="#5c5c5c" stroke-width="6.2" stroke-linecap="round" fill="none"/><path d="M60 166L110 150" stroke="#bdbdbd" stroke-width="4" stroke-linecap="round" fill="none"/><path d="M60 166L110 150" stroke="#f4f4f4" stroke-width="1.2" stroke-linecap="round" fill="none"/><path d="M6 152L14 150L15 158L8 160Z" fill="#cfcfcf" stroke="#7a7a7a" stroke-width="0.6"/><path d="M72 122V140M84 118V138M96 114V134" stroke="#7a7a7a" stroke-width="5" stroke-linecap="round"/><path d="M72 122V140M84 118V138M96 114V134" stroke="#dcdcdc" stroke-width="2.4" stroke-linecap="round"/><path d="M92 158V176M104 154V172" stroke="#7a7a7a" stroke-width="5" stroke-linecap="round"/><path d="M92 158V176M104 154V172" stroke="#d0d0d0" stroke-width="2.4" stroke-linecap="round"/><path d="M66 173H102L100 207H68Z" fill="#e4e2e6" opacity="0.85" stroke="#c9c9cf" stroke-width="0.8"/><path d="M67.6 193C78 189 90 189 100.6 193L100 207H68Z" fill="#e2b23c"/><path d="M70 197C80 193 90 194 98 198" stroke="#f3dc88" stroke-width="2.4" fill="none"/><text x="5" y="12" font-family="'Liberation Sans',sans-serif" font-size="7.2" fill="#f2f2f2" textLength="28" lengthAdjust="spacingAndGlyphs">ISO 300</text></g></svg>
<svg class="a" style="left:351px;top:360px" width="251" height="164" viewBox="0 0 251 164"><defs><linearGradient id="fbg" x1="0" y1="0" x2="0" y2="1"><stop offset="0" stop-color="#33241e"/><stop offset="0.35" stop-color="#4e3b30"/><stop offset="0.6" stop-color="#806a56"/><stop offset="1" stop-color="#b29c80"/></linearGradient><radialGradient id="fvig" cx="0.5" cy="0.15" r="0.75"><stop offset="0" stop-color="#1c100e" stop-opacity="0.65"/><stop offset="1" stop-color="#1c100e" stop-opacity="0"/></radialGradient><linearGradient id="fbask" x1="0" y1="0" x2="0" y2="1"><stop offset="0" stop-color="#a46a46"/><stop offset="0.5" stop-color="#90583a"/><stop offset="1" stop-color="#643a26"/></linearGradient><pattern id="fweave" width="6" height="3.2" patternUnits="userSpaceOnUse"><rect width="6" height="3.2" fill="none"/><path d="M0 0.6H6" stroke="#3a1e12" stroke-width="0.9" opacity="0.75"/><path d="M0 2.1H6" stroke="#b88458" stroke-width="0.8" opacity="0.5"/><path d="M3 0V3.2" stroke="#4a2616" stroke-width="0.7" opacity="0.5"/></pattern><radialGradient id="fapple" cx="0.35" cy="0.3" r="0.75"><stop offset="0" stop-color="#f06a6a"/><stop offset="0.55" stop-color="#d42434"/><stop offset="1" stop-color="#8a1220"/></radialGradient><radialGradient id="forange" cx="0.35" cy="0.3" r="0.75"><stop offset="0" stop-color="#f6c060"/><stop offset="0.55" stop-color="#e88c1e"/><stop offset="1" stop-color="#b45e10"/></radialGradient><radialGradient id="flemon" cx="0.35" cy="0.3" r="0.75"><stop offset="0" stop-color="#f8e468"/><stop offset="0.55" stop-color="#e6c020"/><stop offset="1" stop-color="#b08a10"/></radialGradient><radialGradient id="fmango" cx="0.35" cy="0.3" r="0.75"><stop offset="0" stop-color="#9cc060"/><stop offset="0.55" stop-color="#5c9438"/><stop offset="1" stop-color="#34601e"/></radialGradient><radialGradient id="fpep" cx="0.35" cy="0.3" r="0.75"><stop offset="0" stop-color="#6ab04a"/><stop offset="0.55" stop-color="#347a2c"/><stop offset="1" stop-color="#1c4a18"/></radialGradient><radialGradient id="frpep" cx="0.35" cy="0.3" r="0.75"><stop offset="0" stop-color="#f05a4a"/><stop offset="0.55" stop-color="#c81c1c"/><stop offset="1" stop-color="#7c0e10"/></radialGradient><radialGradient id="fgarl" cx="0.35" cy="0.3" r="0.75"><stop offset="0" stop-color="#fbf7ee"/><stop offset="0.55" stop-color="#e8dcc6"/><stop offset="1" stop-color="#b09c80"/></radialGradient><linearGradient id="fban" x1="0" y1="0" x2="0" y2="1"><stop offset="0" stop-color="#f4da58"/><stop offset="1" stop-color="#c89a20"/></linearGradient><linearGradient id="fboard" x1="0" y1="0" x2="0" y2="1"><stop offset="0" stop-color="#a86240"/><stop offset="1" stop-color="#7e4128"/></linearGradient><filter id="fb1" x="-20%" y="-20%" width="140%" height="140%"><feGaussianBlur stdDeviation="0.7"/></filter><filter id="fb2" x="-20%" y="-20%" width="140%" height="140%"><feGaussianBlur stdDeviation="3"/></filter><clipPath id="fclip"><rect width="251" height="164"/></clipPath></defs><g clip-path="url(#fclip)"><rect width="251" height="164" fill="url(#fbg)"/><rect width="251" height="164" fill="url(#fvig)"/><g filter="url(#fb2)"><ellipse cx="20" cy="125" rx="40" ry="36" fill="#a8927a" opacity="0.55"/><ellipse cx="240" cy="140" rx="30" ry="40" fill="#ccb698" opacity="0.8"/><ellipse cx="230" cy="60" rx="30" ry="40" fill="#1e1210" opacity="0.5"/><ellipse cx="15" cy="40" rx="30" ry="40" fill="#3e2e26" opacity="0.4"/></g><path d="M44 127L76 114L238 116C243 118 244 130 240 136L200 161C196 164 190 164 186 164H150L46 133C43 132 43 128 44 127Z" fill="url(#fboard)"/><path d="M50 128L78 118L232 120" stroke="#6c3822" stroke-width="0.8" fill="none"/><path d="M46 133L150 164H186C194 164 198 162 202 160L240 136" stroke="#5c2e1c" stroke-width="2.4" fill="none" opacity="0.7"/><path d="M10 104C12 96 30 94 44 95C56 96 66 104 70 112L72 118L40 118C26 120 12 118 10 104Z" fill="#7e4630"/><path d="M14 100C24 96 40 97 54 102" stroke="#a8684a" stroke-width="2.4" fill="none" filter="url(#fb1)"/><ellipse cx="101" cy="27" rx="35" ry="17" transform="rotate(-27 101 27)" fill="url(#fmango)"/><path d="M164 22C180 2 222 14 236 52C238 62 232 70 226 66C216 40 196 30 170 32C164 30 162 26 164 22Z" fill="url(#fban)"/><path d="M166 26C176 34 186 32 190 38L176 36Z" fill="#e0b430"/><ellipse cx="88" cy="53" rx="28" ry="11" transform="rotate(-24 88 53)" fill="url(#fpep)"/><ellipse cx="222" cy="72" rx="11" ry="10" fill="url(#fpep)"/><circle cx="147.5" cy="40" r="26" fill="url(#fapple)"/><path d="M150 18C152 14 156 13 158 14" stroke="#4a2a14" stroke-width="1" fill="none"/><circle cx="193" cy="53" r="22.5" fill="url(#forange)"/><ellipse cx="105" cy="59" rx="21.5" ry="17.5" transform="rotate(-18 105 59)" fill="url(#flemon)"/><ellipse cx="137" cy="70" rx="22" ry="15" transform="rotate(8 137 70)" fill="url(#flemon)"/><path d="M157 66C164 60 174 64 180 74L182 88H158C154 82 154 72 157 66Z" fill="url(#frpep)"/><path d="M184 74C196 68 214 70 222 80L220 90H184C180 84 180 78 184 74Z" fill="url(#frpep)"/><path d="M53 60C56 74 70 82 100 88C140 94 200 92 236 76C240 74 242 72 242 70C246 84 236 104 222 124C210 134 150 136 116 128C92 122 78 114 72 100C64 86 54 72 53 60Z" fill="url(#fbask)"/><path d="M53 60C56 74 70 82 100 88C140 94 200 92 236 76C240 74 242 72 242 70C246 84 236 104 222 124C210 134 150 136 116 128C92 122 78 114 72 100C64 86 54 72 53 60Z" fill="url(#fweave)"/><path d="M54 62C58 76 72 84 100 90C140 97 200 95 240 74" stroke="#9c6844" stroke-width="4" fill="none"/><path d="M54 64C58 78 72 87 100 93C140 100 200 98 241 77" stroke="#4a2616" stroke-width="1.2" fill="none"/><path d="M76 112C100 128 160 134 222 122" stroke="#3a1c10" stroke-width="3" fill="none" opacity="0.7"/><path d="M6 138L66 134L150 160L152 164H32L18 152Z" fill="#1d5cb4"/><path d="M30 150L100 150L150 163" stroke="#123c84" stroke-width="2" fill="none" opacity="0.7"/><path d="M32 138L124 158" stroke="#4a4a4a" stroke-width="7" stroke-linecap="round"/><path d="M34 138L74 147" stroke="#d4d4d4" stroke-width="5" stroke-linecap="round"/><path d="M76 149L112 156" stroke="#b8b8b8" stroke-width="2.4" stroke-dasharray="1.4 1"/><path d="M112 160L122 146L128 149L120 164Z" fill="#dcdcdc" stroke="#6a6a6a" stroke-width="0.6"/><circle cx="36" cy="137" r="5" fill="#cfcfcf" stroke="#555" stroke-width="0.8"/><path d="M130 136C130 124 142 116 152 118C158 122 158 140 154 146C146 148 134 146 130 136Z" fill="url(#fgarl)"/><path d="M154 122C164 120 172 128 171 138C168 144 160 146 155 146C158 138 158 128 154 122Z" fill="url(#fgarl)"/><path d="M174 130C180 124 194 128 199 134C198 142 190 148 180 146C174 142 172 136 174 130Z" fill="url(#fgarl)"/><path d="M196 132L208 118" stroke="#d8ccb4" stroke-width="1.2"/><text x="5.5" y="11.6" font-family="'Liberation Sans',sans-serif" font-size="6.4" fill="#e4dcd6" textLength="27" lengthAdjust="spacingAndGlyphs">ISO 300</text></g></svg>
<svg class="a" style="left:270px;top:350px" width="75" height="60" viewBox="270 350 75 60"><text x="275.4" y="376.6" font-family="'Liberation Sans',sans-serif" font-size="29.5" font-weight="bold" font-style="italic" fill="#2f55a4" stroke="#2f55a4" stroke-width="1.3" stroke-linejoin="round" textLength="38.6" lengthAdjust="spacingAndGlyphs">efi</text><text x="297.2" y="380.7" font-family="'Liberation Sans',sans-serif" font-size="5.2" font-weight="bold" fill="#34405e" textLength="36" lengthAdjust="spacingAndGlyphs">created to print</text><text x="274.7" y="395.8" font-family="'Liberation Sans',sans-serif" font-size="6.5" font-weight="bold" fill="#16161c" textLength="60.3" lengthAdjust="spacingAndGlyphs">EFI Form Offset v10</text><text x="279.8" y="401.2" font-family="'Liberation Sans',sans-serif" font-size="3.6" fill="#3a3a44" textLength="48.1" lengthAdjust="spacingAndGlyphs">Electronics for Imaging, Inc.</text><text x="294.2" y="407" font-family="'Liberation Sans',sans-serif" font-size="3.6" fill="#3a3a44" textLength="20.4" lengthAdjust="spacingAndGlyphs">www.efi.com</text></svg>
<svg class="a" style="left:270px;top:415px" width="70" height="70" viewBox="270 415 70 70"><defs><clipPath id="cc"><circle cx="304.7" cy="437.5" r="19.4"/></clipPath><clipPath id="cm"><circle cx="292.8" cy="457.3" r="19.4"/></clipPath></defs><circle cx="304.7" cy="437.5" r="19.4" fill="#5c9cd9"/><circle cx="292.8" cy="457.3" r="19.4" fill="#c73d8c"/><circle cx="316.5" cy="457.3" r="19.4" fill="#f2e23f"/><circle cx="292.8" cy="457.3" r="19.4" fill="#2b2c9c" clip-path="url(#cc)"/><circle cx="316.5" cy="457.3" r="19.4" fill="#2b9a4b" clip-path="url(#cc)"/><circle cx="316.5" cy="457.3" r="19.4" fill="#d23a28" clip-path="url(#cm)"/><g clip-path="url(#cc)"><circle cx="316.5" cy="457.3" r="19.4" fill="#2f2837" clip-path="url(#cm)"/></g></svg>
<svg class="a" style="left:270px;top:485px" width="70" height="40" viewBox="270 485 70 40"><defs><linearGradient id="bcr" x1="0" y1="0" x2="1" y2="0"><stop offset="0" stop-color="#5a3a9a"/><stop offset="0.2" stop-color="#3a6ac8"/><stop offset="0.45" stop-color="#e8e8e8"/><stop offset="0.65" stop-color="#58b048"/><stop offset="0.85" stop-color="#e8d040"/><stop offset="1" stop-color="#d85030"/></linearGradient><radialGradient id="bcs" cx="0.45" cy="0.4" r="0.7"><stop offset="0" stop-color="#e6e6e8"/><stop offset="0.6" stop-color="#a4a4aa"/><stop offset="1" stop-color="#6c6c74"/></radialGradient></defs><g transform="rotate(-9 303.3 504.9)"><ellipse cx="303.3" cy="504.9" rx="27.8" ry="13.6" fill="url(#bcr)"/><ellipse cx="303.3" cy="504.9" rx="25.2" ry="11" fill="url(#bcs)"/><text x="279" y="506" font-family="'Liberation Sans',sans-serif" font-size="10.8" font-weight="bold" font-style="italic" fill="#15151a" stroke="#15151a" stroke-width="0.5" textLength="48.4" lengthAdjust="spacingAndGlyphs">bestcolor</text><text x="277.6" y="512.4" font-family="'Liberation Sans',sans-serif" font-size="8.2" font-weight="bold" font-style="italic" fill="#f6f6f8" stroke="#f6f6f8" stroke-width="0.3" textLength="40" lengthAdjust="spacingAndGlyphs">technology</text></g></svg>
<svg class="a" style="left:60px;top:418px" width="200" height="104" viewBox="60 418 200 104"><rect x="68.00" y="429.00" width="16.90" height="17.65" fill="#f0f1f7"/><rect x="84.80" y="429.00" width="16.90" height="17.65" fill="#eff1f7"/><rect x="101.60" y="429.00" width="16.90" height="17.65" fill="#eef0f7"/><rect x="118.40" y="429.00" width="16.90" height="17.65" fill="#edeff6"/><rect x="135.20" y="429.00" width="16.90" height="17.65" fill="#eceff6"/><rect x="152.00" y="429.00" width="16.90" height="17.65" fill="#e9edf6"/><rect x="168.80" y="429.00" width="16.90" height="17.65" fill="#e7ecf5"/><rect x="185.60" y="429.00" width="16.90" height="17.65" fill="#e1e9f5"/><rect x="202.40" y="429.00" width="16.90" height="17.65" fill="#d9e4f3"/><rect x="219.20" y="429.00" width="16.90" height="17.65" fill="#cfdef2"/><rect x="236.00" y="429.00" width="16.90" height="17.65" fill="#c6d9f0"/><rect x="68.00" y="446.55" width="16.90" height="17.65" fill="#f0f1f7"/><rect x="84.80" y="446.55" width="16.90" height="17.65" fill="#f0f0f6"/><rect x="101.60" y="446.55" width="16.90" height="17.65" fill="#f0eff6"/><rect x="118.40" y="446.55" width="16.90" height="17.65" fill="#efeef5"/><rect x="135.20" y="446.55" width="16.90" height="17.65" fill="#efedf4"/><rect x="152.00" y="446.55" width="16.90" height="17.65" fill="#eeeaf3"/><rect x="168.80" y="446.55" width="16.90" height="17.65" fill="#eee8f2"/><rect x="185.60" y="446.55" width="16.90" height="17.65" fill="#ece2ee"/><rect x="202.40" y="446.55" width="16.90" height="17.65" fill="#ead9e9"/><rect x="219.20" y="446.55" width="16.90" height="17.65" fill="#e8cfe4"/><rect x="236.00" y="446.55" width="16.90" height="17.65" fill="#e6c6de"/><rect x="68.00" y="464.10" width="16.90" height="17.65" fill="#f0f1f7"/><rect x="84.80" y="464.10" width="16.90" height="17.65" fill="#f0f1f6"/><rect x="101.60" y="464.10" width="16.90" height="17.65" fill="#f0f1f5"/><rect x="118.40" y="464.10" width="16.90" height="17.65" fill="#f1f1f3"/><rect x="135.20" y="464.10" width="16.90" height="17.65" fill="#f1f0f2"/><rect x="152.00" y="464.10" width="16.90" height="17.65" fill="#f1f0ee"/><rect x="168.80" y="464.10" width="16.90" height="17.65" fill="#f2f0eb"/><rect x="185.60" y="464.10" width="16.90" height="17.65" fill="#f3efe4"/><rect x="202.40" y="464.10" width="16.90" height="17.65" fill="#f4eed9"/><rect x="219.20" y="464.10" width="16.90" height="17.65" fill="#f6edcc"/><rect x="236.00" y="464.10" width="16.90" height="17.65" fill="#f8ecc0"/><rect x="68.00" y="481.65" width="16.90" height="17.65" fill="#f0f1f7"/><rect x="84.80" y="481.65" width="16.90" height="17.65" fill="#eff0f6"/><rect x="101.60" y="481.65" width="16.90" height="17.65" fill="#eeeff5"/><rect x="118.40" y="481.65" width="16.90" height="17.65" fill="#ededf3"/><rect x="135.20" y="481.65" width="16.90" height="17.65" fill="#ececf2"/><rect x="152.00" y="481.65" width="16.90" height="17.65" fill="#e9eaf0"/><rect x="168.80" y="481.65" width="16.90" height="17.65" fill="#e7e7ed"/><rect x="185.60" y="481.65" width="16.90" height="17.65" fill="#e1e1e7"/><rect x="202.40" y="481.65" width="16.90" height="17.65" fill="#d9d8de"/><rect x="219.20" y="481.65" width="16.90" height="17.65" fill="#cfcdd4"/><rect x="236.00" y="481.65" width="16.90" height="17.65" fill="#c6c3ca"/><rect x="68.00" y="499.20" width="16.90" height="17.65" fill="#f0f1f7"/><rect x="84.80" y="499.20" width="16.90" height="17.65" fill="#eff0f6"/><rect x="101.60" y="499.20" width="16.90" height="17.65" fill="#eef0f5"/><rect x="118.40" y="499.20" width="16.90" height="17.65" fill="#eceff3"/><rect x="135.20" y="499.20" width="16.90" height="17.65" fill="#ebeef2"/><rect x="152.00" y="499.20" width="16.90" height="17.65" fill="#e8edee"/><rect x="168.80" y="499.20" width="16.90" height="17.65" fill="#e5ebeb"/><rect x="185.60" y="499.20" width="16.90" height="17.65" fill="#dfe7e4"/><rect x="202.40" y="499.20" width="16.90" height="17.65" fill="#d5e2d9"/><rect x="219.20" y="499.20" width="16.90" height="17.65" fill="#cadbcc"/><rect x="236.00" y="499.20" width="16.90" height="17.65" fill="#bfd5c0"/><rect x="67.80" y="429.00" width="0.8" height="87.75" fill="#9c9ca6"/><rect x="118.20" y="429.00" width="0.8" height="87.75" fill="#9c9ca6"/><rect x="135.00" y="429.00" width="0.8" height="87.75" fill="#9c9ca6"/><rect x="151.80" y="429.00" width="0.8" height="87.75" fill="#9c9ca6"/><rect x="202.20" y="429.00" width="0.8" height="87.75" fill="#9c9ca6"/><rect x="219.00" y="429.00" width="0.8" height="87.75" fill="#9c9ca6"/><rect x="235.80" y="429.00" width="0.8" height="87.75" fill="#9c9ca6"/><rect x="68" y="446.25" width="184.8" height="0.7" fill="#b4b4bc"/><rect x="68" y="463.40" width="184.8" height="1.5" fill="#a2a2aa"/><rect x="68" y="481.25" width="184.8" height="0.9" fill="#aaaab2"/><rect x="68" y="498.80" width="184.8" height="0.8" fill="#f2f3f8"/><text x="76.40" y="426.6" font-family="'Liberation Sans',sans-serif" font-size="3.8" fill="#6a6a76" text-anchor="middle">0%</text><text x="93.20" y="426.6" font-family="'Liberation Sans',sans-serif" font-size="3.8" fill="#6a6a76" text-anchor="middle">1%</text><text x="110.00" y="426.6" font-family="'Liberation Sans',sans-serif" font-size="3.8" fill="#6a6a76" text-anchor="middle">2%</text><text x="126.80" y="426.6" font-family="'Liberation Sans',sans-serif" font-size="3.8" fill="#6a6a76" text-anchor="middle">3%</text><text x="143.60" y="426.6" font-family="'Liberation Sans',sans-serif" font-size="3.8" fill="#6a6a76" text-anchor="middle">5%</text><text x="160.40" y="426.6" font-family="'Liberation Sans',sans-serif" font-size="3.8" fill="#6a6a76" text-anchor="middle">7%</text><text x="177.20" y="426.6" font-family="'Liberation Sans',sans-serif" font-size="3.8" fill="#6a6a76" text-anchor="middle">10%</text><text x="194.00" y="426.6" font-family="'Liberation Sans',sans-serif" font-size="3.8" fill="#6a6a76" text-anchor="middle">15%</text><text x="210.80" y="426.6" font-family="'Liberation Sans',sans-serif" font-size="3.8" fill="#6a6a76" text-anchor="middle">20%</text><text x="227.60" y="426.6" font-family="'Liberation Sans',sans-serif" font-size="3.8" fill="#6a6a76" text-anchor="middle">30%</text><text x="244.40" y="426.6" font-family="'Liberation Sans',sans-serif" font-size="3.8" fill="#6a6a76" text-anchor="middle">40%</text></svg>
<svg class="a" style="left:46px;top:542px" width="480" height="42" viewBox="46 542 480 42"><rect x="46.2" y="543" width="34.7" height="34.7" fill="#c53043"/><path d="M62.95 543L54.7 550.6L64.1 550.6L55.3 558.6L62.95 558.6L57.3 566.3L72 557.2L66.9 557.2L76 549.2L68.1 549.2L74.9 543Z" fill="#fff"/><text x="48.6" y="574.7" font-family="'Liberation Sans',sans-serif" font-size="12.6" font-weight="bold" font-style="italic" fill="#fff" stroke="#fff" stroke-width="0.55" textLength="30.4" lengthAdjust="spacingAndGlyphs">fiery</text><rect x="82.6" y="543.6" width="1.4" height="1.4" fill="#c8283e"/><text x="91.4" y="547.1" font-family="'Liberation Sans',sans-serif" font-size="3.6" fill="#34343e" textLength="112.6" lengthAdjust="spacingAndGlyphs">Job: EFI_Form_Offset_v10_A4.pdf  ID: 377  Fiery XF 7.3</text><text x="91.4" y="552.3" font-family="'Liberation Sans',sans-serif" font-size="3.6" fill="#34343e" textLength="427.6" lengthAdjust="spacingAndGlyphs">Workflow: Linearisierung  Medium: EFI Gravure Proof Paper 4245 Semimatt  Drucker: Epson Stylus Pro 4900  Tinte: UltraChrome HDR  Auflösung: 1440 x 720 dpi  Farbmodus: CMYKOG</text><text x="91.4" y="557.4" font-family="'Liberation Sans',sans-serif" font-size="3.6" fill="#34343e" textLength="24.6" lengthAdjust="spacingAndGlyphs">ICC-Profile:</text><text x="91.4" y="562.5" font-family="'Liberation Sans',sans-serif" font-size="3.6" fill="#34343e" textLength="169.6" lengthAdjust="spacingAndGlyphs">Quelle: ISOcoated_v2_eci.icc  Simulation: ISOcoated_v2_eci.icc  Rendering Intent: absolut farbmetrisch</text><text x="91.4" y="567.4" font-family="'Liberation Sans',sans-serif" font-size="3.6" fill="#34343e" textLength="159.6" lengthAdjust="spacingAndGlyphs">Medienprofil: EFI_Gravure_4245.icc  Kalibrierung: EP4900_1440x720_4245.epl  L*a*b*-Optimierung: aus</text><text x="91.4" y="572.2" font-family="'Liberation Sans',sans-serif" font-size="3.6" fill="#34343e" textLength="284.6" lengthAdjust="spacingAndGlyphs">Datum: 14.03.2024 10:42:17  Benutzer: admin  Server: 127.0.0.1  Kontrollstreifen: Ugra/Fogra-Medienkeil CMYK V3.0  Dynamischer Keil: aus</text><text x="91.4" y="577.1" font-family="'Liberation Sans',sans-serif" font-size="3.6" fill="#34343e" textLength="118.6" lengthAdjust="spacingAndGlyphs">Seitengröße: 29,70 x 21,00 cm  Skalierung: 100 %  Drehung: 0°</text><text x="93" y="582.4" font-family="'Liberation Sans',sans-serif" font-size="3.6" fill="#34343e" textLength="87" lengthAdjust="spacingAndGlyphs">Schnittmarken: aus  Fußzeile: ein  Seite 1/1</text></svg>
<svg class="a" style="left:110px;top:588px" width="370" height="92" viewBox="110 588 370 92"><rect x="122.00" y="596.40" width="14.07" height="23.35" fill="#009ee0"/><rect x="135.92" y="596.40" width="14.07" height="23.35" fill="#6eb0e4"/><rect x="149.84" y="596.40" width="14.07" height="23.35" fill="#b4d3f0"/><rect x="163.76" y="596.40" width="14.07" height="23.35" fill="#dbe8f7"/><rect x="177.68" y="596.40" width="14.07" height="23.35" fill="#ecf2fb"/><rect x="191.60" y="596.40" width="14.07" height="23.35" fill="#c0007c"/><rect x="205.52" y="596.40" width="14.07" height="23.35" fill="#cc6e9c"/><rect x="219.44" y="596.40" width="14.07" height="23.35" fill="#e0b0c8"/><rect x="233.36" y="596.40" width="14.07" height="23.35" fill="#efdbe4"/><rect x="247.28" y="596.40" width="14.07" height="23.35" fill="#f6ebf0"/><rect x="261.20" y="596.40" width="14.07" height="23.35" fill="#ffe800"/><rect x="275.12" y="596.40" width="14.07" height="23.35" fill="#ffee70"/><rect x="289.04" y="596.40" width="14.07" height="23.35" fill="#fff2b0"/><rect x="302.96" y="596.40" width="14.07" height="23.35" fill="#fff8dc"/><rect x="316.88" y="596.40" width="14.07" height="23.35" fill="#fffcf0"/><rect x="330.80" y="596.40" width="14.07" height="23.35" fill="#ececec"/><rect x="344.72" y="596.40" width="14.07" height="23.35" fill="#dadada"/><rect x="358.64" y="596.40" width="14.07" height="23.35" fill="#b2b2b2"/><rect x="372.56" y="596.40" width="14.07" height="23.35" fill="#8a8a8a"/><rect x="386.48" y="596.40" width="14.07" height="23.35" fill="#5a5a5a"/><rect x="400.40" y="596.40" width="14.07" height="23.35" fill="#1a1a1a"/><rect x="414.32" y="596.40" width="14.07" height="23.35" fill="#10000c"/><rect x="428.24" y="596.40" width="14.07" height="23.35" fill="#6e3a26"/><rect x="442.16" y="596.40" width="14.07" height="23.35" fill="#58502a"/><rect x="122.00" y="619.60" width="14.07" height="23.55" fill="#00006e"/><rect x="135.92" y="619.60" width="14.07" height="23.55" fill="#5a4e8c"/><rect x="149.84" y="619.60" width="14.07" height="23.55" fill="#9c90b8"/><rect x="163.76" y="619.60" width="14.07" height="23.55" fill="#cdc6dc"/><rect x="177.68" y="619.60" width="14.07" height="23.55" fill="#e5e2ef"/><rect x="191.60" y="619.60" width="14.07" height="23.55" fill="#c80000"/><rect x="205.52" y="619.60" width="14.07" height="23.55" fill="#cc6a40"/><rect x="219.44" y="619.60" width="14.07" height="23.55" fill="#e0aa8a"/><rect x="233.36" y="619.60" width="14.07" height="23.55" fill="#f0d8c4"/><rect x="247.28" y="619.60" width="14.07" height="23.55" fill="#f8ece0"/><rect x="261.20" y="619.60" width="14.07" height="23.55" fill="#008c10"/><rect x="275.12" y="619.60" width="14.07" height="23.55" fill="#70a868"/><rect x="289.04" y="619.60" width="14.07" height="23.55" fill="#b0c8a8"/><rect x="302.96" y="619.60" width="14.07" height="23.55" fill="#d8e2d4"/><rect x="316.88" y="619.60" width="14.07" height="23.55" fill="#eef0ea"/><rect x="330.80" y="619.60" width="14.07" height="23.55" fill="#e8e8e8"/><rect x="344.72" y="619.60" width="14.07" height="23.55" fill="#d2d2d2"/><rect x="358.64" y="619.60" width="14.07" height="23.55" fill="#a4a4a2"/><rect x="372.56" y="619.60" width="14.07" height="23.55" fill="#7a7c76"/><rect x="386.48" y="619.60" width="14.07" height="23.55" fill="#484e46"/><rect x="400.40" y="619.60" width="14.07" height="23.55" fill="#042a22"/><rect x="414.32" y="619.60" width="14.07" height="23.55" fill="#000c14"/><rect x="428.24" y="619.60" width="14.07" height="23.55" fill="#5a0020"/><rect x="442.16" y="619.60" width="14.07" height="23.55" fill="#263826"/><rect x="122.00" y="643.00" width="14.07" height="23.15" fill="#000000"/><rect x="135.92" y="643.00" width="14.07" height="23.15" fill="#5a4a3c"/><rect x="149.84" y="643.00" width="14.07" height="23.15" fill="#9c8c80"/><rect x="163.76" y="643.00" width="14.07" height="23.15" fill="#ccc0b8"/><rect x="177.68" y="643.00" width="14.07" height="23.15" fill="#e4e0dc"/><rect x="191.60" y="643.00" width="14.07" height="23.15" fill="#b06040"/><rect x="205.52" y="643.00" width="14.07" height="23.15" fill="#804c38"/><rect x="219.44" y="643.00" width="14.07" height="23.15" fill="#7a0000"/><rect x="233.36" y="643.00" width="14.07" height="23.15" fill="#780048"/><rect x="247.28" y="643.00" width="14.07" height="23.15" fill="#8a7000"/><rect x="261.20" y="643.00" width="14.07" height="23.15" fill="#085808"/><rect x="275.12" y="643.00" width="14.07" height="23.15" fill="#005a68"/><rect x="289.04" y="643.00" width="14.07" height="23.15" fill="#000044"/><rect x="302.96" y="643.00" width="14.07" height="23.15" fill="#d4a488"/><rect x="316.88" y="643.00" width="14.07" height="23.15" fill="#e0a800"/><rect x="330.80" y="643.00" width="14.07" height="23.15" fill="#c40058"/><rect x="344.72" y="643.00" width="14.07" height="23.15" fill="#860072"/><rect x="358.64" y="643.00" width="14.07" height="23.15" fill="#b8c000"/><rect x="372.56" y="643.00" width="14.07" height="23.15" fill="#0098a0"/><rect x="386.48" y="643.00" width="14.07" height="23.15" fill="#0068ac"/><rect x="400.40" y="643.00" width="14.07" height="23.15" fill="#ffffff"/><rect x="414.32" y="643.00" width="14.07" height="23.15" fill="#181204"/><rect x="428.24" y="643.00" width="14.07" height="23.15" fill="#6e3c54"/><rect x="442.16" y="643.00" width="14.07" height="23.15" fill="#263c50"/><rect x="115.2" y="599" width="6.9" height="17.8" fill="#141414"/><rect x="456" y="599" width="7.4" height="17.8" fill="#141414"/><rect x="115.2" y="622" width="6.9" height="17.4" fill="#141414"/><rect x="456" y="622" width="7.4" height="17.4" fill="#141414"/><rect x="115.2" y="646" width="6.9" height="17.4" fill="#141414"/><rect x="456" y="646" width="7.4" height="17.4" fill="#141414"/><text x="142.88" y="595.6" font-family="'Liberation Sans',sans-serif" font-size="3.4" fill="#2a2a30" text-anchor="middle">2</text><text x="156.80" y="595.6" font-family="'Liberation Sans',sans-serif" font-size="3.4" fill="#2a2a30" text-anchor="middle">3</text><text x="170.72" y="595.6" font-family="'Liberation Sans',sans-serif" font-size="3.4" fill="#2a2a30" text-anchor="middle">4</text><text x="184.64" y="595.6" font-family="'Liberation Sans',sans-serif" font-size="3.4" fill="#2a2a30" text-anchor="middle">5</text><text x="198.56" y="595.6" font-family="'Liberation Sans',sans-serif" font-size="3.4" fill="#2a2a30" text-anchor="middle">6</text><text x="212.48" y="595.6" font-family="'Liberation Sans',sans-serif" font-size="3.4" fill="#2a2a30" text-anchor="middle">7</text><text x="226.40" y="595.6" font-family="'Liberation Sans',sans-serif" font-size="3.4" fill="#2a2a30" text-anchor="middle">8</text><text x="240.32" y="595.6" font-family="'Liberation Sans',sans-serif" font-size="3.4" fill="#2a2a30" text-anchor="middle">9</text><text x="254.24" y="595.6" font-family="'Liberation Sans',sans-serif" font-size="3.4" fill="#2a2a30" text-anchor="middle">10</text><text x="268.16" y="595.6" font-family="'Liberation Sans',sans-serif" font-size="3.4" fill="#2a2a30" text-anchor="middle">11</text><text x="282.08" y="595.6" font-family="'Liberation Sans',sans-serif" font-size="3.4" fill="#2a2a30" text-anchor="middle">12</text><text x="296.00" y="595.6" font-family="'Liberation Sans',sans-serif" font-size="3.4" fill="#2a2a30" text-anchor="middle">13</text><text x="309.92" y="595.6" font-family="'Liberation Sans',sans-serif" font-size="3.4" fill="#2a2a30" text-anchor="middle">14</text><text x="323.84" y="595.6" font-family="'Liberation Sans',sans-serif" font-size="3.4" fill="#2a2a30" text-anchor="middle">15</text><text x="337.76" y="595.6" font-family="'Liberation Sans',sans-serif" font-size="3.4" fill="#2a2a30" text-anchor="middle">16</text><text x="351.68" y="595.6" font-family="'Liberation Sans',sans-serif" font-size="3.4" fill="#2a2a30" text-anchor="middle">17</text><text x="365.60" y="595.6" font-family="'Liberation Sans',sans-serif" font-size="3.4" fill="#2a2a30" text-anchor="middle">18</text><text x="379.52" y="595.6" font-family="'Liberation Sans',sans-serif" font-size="3.4" fill="#2a2a30" text-anchor="middle">19</text><text x="393.44" y="595.6" font-family="'Liberation Sans',sans-serif" font-size="3.4" fill="#2a2a30" text-anchor="middle">20</text><text x="407.36" y="595.6" font-family="'Liberation Sans',sans-serif" font-size="3.4" fill="#2a2a30" text-anchor="middle">21</text><text x="421.28" y="595.6" font-family="'Liberation Sans',sans-serif" font-size="3.4" fill="#2a2a30" text-anchor="middle">22</text><text x="435.20" y="595.6" font-family="'Liberation Sans',sans-serif" font-size="3.4" fill="#2a2a30" text-anchor="middle">23</text><text x="449.12" y="595.6" font-family="'Liberation Sans',sans-serif" font-size="3.4" fill="#2a2a30" text-anchor="middle">24</text><text x="122" y="673.2" font-family="'Liberation Sans',sans-serif" font-size="6.4" fill="#1c1c24" textLength="104" lengthAdjust="spacingAndGlyphs">Fogra Media Wedge CMYK V3.0 XC 3Z</text><text x="241.7" y="672.8" font-family="'Liberation Sans',sans-serif" font-size="4.6" fill="#2c2c34" textLength="34" lengthAdjust="spacingAndGlyphs">Licensing date:</text><text x="291.5" y="672.8" font-family="'Liberation Sans',sans-serif" font-size="4.6" fill="#2c2c34" textLength="11.6" lengthAdjust="spacingAndGlyphs">User:</text><text x="305" y="673.2" font-family="'Liberation Sans',sans-serif" font-size="6" fill="#1c1c24" textLength="31.6" lengthAdjust="spacingAndGlyphs">AT000.00.00</text><text x="358.6" y="672.8" font-family="'Liberation Sans',sans-serif" font-size="4.6" fill="#2c2c34" textLength="11" lengthAdjust="spacingAndGlyphs">User:</text><text x="376" y="673.2" font-family="'Liberation Sans',sans-serif" font-size="6.2" fill="#1c1c24" textLength="45" lengthAdjust="spacingAndGlyphs">EFI License 2008</text></svg>
<div class="a" style="left:46px;top:126px;width:577px;height:408px;border:1px solid #000;box-sizing:border-box;"></div>
<div class="a" style="left:42px;top:122px;width:8px;height:8px;background:#fff;border:1px solid #000;box-sizing:border-box;"></div>
<div class="a" style="left:331px;top:122px;width:8px;height:8px;background:#fff;border:1px solid #000;box-sizing:border-box;"></div>
<div class="a" style="left:619px;top:122px;width:8px;height:8px;background:#fff;border:1px solid #000;box-sizing:border-box;"></div>
<div class="a" style="left:42px;top:326px;width:8px;height:8px;background:#fff;border:1px solid #000;box-sizing:border-box;"></div>
<div class="a" style="left:619px;top:326px;width:8px;height:8px;background:#fff;border:1px solid #000;box-sizing:border-box;"></div>
<div class="a" style="left:42px;top:530px;width:8px;height:8px;background:#fff;border:1px solid #000;box-sizing:border-box;"></div>
<div class="a" style="left:331px;top:530px;width:8px;height:8px;background:#fff;border:1px solid #000;box-sizing:border-box;"></div>
<div class="a" style="left:619px;top:530px;width:8px;height:8px;background:#fff;border:1px solid #000;box-sizing:border-box;"></div>
<div class="a" style="left:700px;top:96px;width:1px;height:931px;background:#8e8e8e;"></div>
<div class="a" style="left:701px;top:96px;width:422px;height:931px;background:#fff;"></div>
<div class="a" style="left:701px;top:96px;width:422px;height:49px;background:#f3f3f3;"></div>
<span class="t" style="left:721.50px;top:113.30px;font-size:15px;line-height:15px;color:#000;font-weight:bold;letter-spacing:-0.021px;">DATEI</span>
<svg class="a" style="left:1094px;top:115px;" width="14" height="11" viewBox="0 0 14 11"><path d="M1 1L5.6 5.5L1 10M7.4 1L12 5.5L7.4 10" fill="none" stroke="#9b9b9b" stroke-width="2.3"/></svg>
<div class="a" style="left:1107px;top:146px;width:16px;height:881px;background:#f0f0f0;"></div>
<div class="a" style="left:1114px;top:437px;width:2.2px;height:573px;background:#787878;border-radius:1px;"></div>
<div class="a" style="left:702px;top:146px;width:404px;height:33px;background:#f2f2f2;"></div>
<svg class="a" style="left:710px;top:157px;" width="10" height="6.2" viewBox="0 0 10 6.2"><path d="M0.8 0.8 L5 5.3 L9.2 0.8" fill="none" stroke="#bcbec9" stroke-width="1.5" stroke-linecap="round" stroke-linejoin="round"/></svg>
<span class="t" style="left:727.45px;top:153.84px;font-size:12px;line-height:12px;color:#5c5a6e;transform:scaleX(0.9157);transform-origin:0 0;">WARNUNG UND FEHLER</span>
<span class="t" style="left:726.52px;top:188.84px;font-size:12px;line-height:12px;color:#000;letter-spacing:-0.263px;">Fehler:</span>
<span class="t" style="left:830.97px;top:194.34px;font-size:12px;line-height:12px;color:#000;letter-spacing:1.766px;">--</span>
<span class="t" style="left:727.45px;top:220.84px;font-size:12px;line-height:12px;color:#000;letter-spacing:0.012px;">Warnungen:</span>
<span class="t" style="left:830.97px;top:221.24px;font-size:12px;line-height:12px;color:#000;letter-spacing:1.766px;">--</span>
<div class="a" style="left:702px;top:260px;width:404px;height:38.5px;background:#f2f2f2;"></div>
<svg class="a" style="left:710px;top:277px;" width="10" height="6.2" viewBox="0 0 10 6.2"><path d="M0.8 0.8 L5 5.3 L9.2 0.8" fill="none" stroke="#bcbec9" stroke-width="1.5" stroke-linecap="round" stroke-linejoin="round"/></svg>
<span class="t" style="left:726.61px;top:273.84px;font-size:12px;line-height:12px;color:#5c5a6e;transform:scaleX(0.9000);transform-origin:0 0;">PS/EPS/PDF</span>
<span class="t" style="left:726.60px;top:308.84px;font-size:12px;line-height:12px;color:#000;transform:scaleX(0.9122);transform-origin:0 0;">PS/PDF</span>
<svg class="a" style="left:727px;top:329px;" width="13" height="13" viewBox="0 0 13 13"><rect x="0" y="0" width="13" height="13" rx="3" fill="#0b60c4"/><path d="M2.9 6.6L5.1 8.9L9.7 3.8" fill="none" stroke="#fff" stroke-width="1.05" stroke-linecap="round" stroke-linejoin="round"/></svg>
<span class="t" style="left:743.48px;top:329.84px;font-size:12px;line-height:12px;color:#000;letter-spacing:-0.012px;">Auftragsverarbeitung bei fehlender Schriftart stoppen</span>
<svg class="a" style="left:727px;top:354px;" width="13" height="13" viewBox="0 0 13 13"><rect x="0" y="0" width="13" height="13" rx="3" fill="#0b60c4"/><path d="M2.9 6.6L5.1 8.9L9.7 3.8" fill="none" stroke="#fff" stroke-width="1.05" stroke-linecap="round" stroke-linejoin="round"/></svg>
<span class="t" style="left:743.23px;top:354.84px;font-size:12px;line-height:12px;color:#000;letter-spacing:-0.077px;">Transparenz-Mischfarbraum aus Datei ignorieren</span>
<span class="t" style="left:726.90px;top:384.84px;font-size:12px;line-height:12px;color:#000;letter-spacing:0.098px;">Größendefinition</span>
<div class="a" style="left:727px;top:405px;width:235px;height:23px;background:#fff;border:1px solid #767676;border-radius:2.5px;box-sizing:border-box;"></div>
<span class="t" style="left:729.22px;top:410.84px;font-size:12px;line-height:12px;color:#000;letter-spacing:0.156px;">Medienrahmen</span>
<svg class="a" style="left:948.6px;top:414.3px;" width="8.5" height="5" viewBox="0 0 8.5 5"><path d="M0.8 0.8 L4.25 4.1 L7.7 0.8" fill="none" stroke="#444" stroke-width="1" stroke-linecap="round" stroke-linejoin="round"/></svg>
<span class="t" style="left:726.96px;top:446.84px;font-size:12px;line-height:12px;color:#000;letter-spacing:-0.337px;">Separation auf RIP</span>
<div class="a" style="left:727px;top:467px;width:115px;height:23px;background:#fff;border:1px solid #767676;border-radius:2.5px;box-sizing:border-box;"></div>
<span class="t" style="left:730.18px;top:472.84px;font-size:12px;line-height:12px;color:#000;letter-spacing:0.013px;">Aktivieren</span>
<svg class="a" style="left:828.6px;top:476.3px;" width="8.5" height="5" viewBox="0 0 8.5 5"><path d="M0.8 0.8 L4.25 4.1 L7.7 0.8" fill="none" stroke="#444" stroke-width="1" stroke-linecap="round" stroke-linejoin="round"/></svg>
<svg class="a" style="left:727px;top:509px;" width="13" height="13" viewBox="0 0 13 13"><rect x="0" y="0" width="13" height="13" rx="3" fill="#0b60c4"/><path d="M2.9 6.6L5.1 8.9L9.7 3.8" fill="none" stroke="#fff" stroke-width="1.05" stroke-linecap="round" stroke-linejoin="round"/></svg>
<span class="t" style="left:742.57px;top:509.84px;font-size:12px;line-height:12px;color:#000;letter-spacing:0.056px;">Überdrucken in Composite-Aufträgen simulieren</span>
<span class="t" style="left:727.48px;top:539.84px;font-size:12px;line-height:12px;color:#000;letter-spacing:0.017px;">Arbeitsfarbraum</span>
<div class="a" style="left:727px;top:560px;width:115px;height:23px;background:#fff;border:1px solid #767676;border-radius:2.5px;box-sizing:border-box;"></div>
<span class="t" style="left:729.63px;top:565.84px;font-size:12px;line-height:12px;color:#000;transform:scaleX(0.9432);transform-origin:0 0;">CMYK</span>
<svg class="a" style="left:828.6px;top:569.3px;" width="8.5" height="5" viewBox="0 0 8.5 5"><path d="M0.8 0.8 L4.25 4.1 L7.7 0.8" fill="none" stroke="#444" stroke-width="1" stroke-linecap="round" stroke-linejoin="round"/></svg>
<div class="a" style="left:727px;top:597px;width:353px;height:1px;background:#8c8c8c;"></div>
<span class="t" style="left:726.52px;top:610.84px;font-size:12px;line-height:12px;color:#000;letter-spacing:-0.158px;">EPS-Auftragserkennung</span>
<span class="t" style="left:727.45px;top:638.84px;font-size:12px;line-height:12px;color:#000;letter-spacing:-0.022px;">Wartezeit bis Auftragsbeendigung</span>
<span class="t" style="left:939.66px;top:638.44px;font-size:12px;line-height:12px;color:#000;letter-spacing:-0.021px;">Standardauflösung</span>
<div class="a" style="left:727.5px;top:659.5px;width:56.5px;height:19.5px;background:#fff;border:1px solid #e4e4e4;border-bottom:1px solid #858585;border-radius:2px;box-sizing:border-box;"></div>
<span class="t" style="left:773.22px;top:662.84px;font-size:12px;line-height:12px;color:#000;">5</span>
<div class="a" style="left:786.3px;top:660.4px;width:14.3px;height:8.1px;border:1px solid #e0e0e0;box-sizing:border-box;background:#fdfdfd;"></div>
<div class="a" style="left:786.3px;top:669px;width:14.3px;height:8.4px;border:1px solid #e0e0e0;box-sizing:border-box;background:#fdfdfd;"></div>
<svg class="a" style="left:790.9px;top:662.5px;" width="5.2" height="3.3" viewBox="0 0 5.2 3.3"><path d="M0 3.3L2.6 0.1L5.2 3.3Z" fill="#1a1a1a"/></svg>
<svg class="a" style="left:790.9px;top:672.2px;" width="5.2" height="3.3" viewBox="0 0 5.2 3.3"><path d="M0 0L2.6 3.2L5.2 0Z" fill="#1a1a1a"/></svg>
<span class="t" style="left:806.46px;top:662.84px;font-size:12px;line-height:12px;color:#000;letter-spacing:-0.218px;">Sekunden</span>
<div class="a" style="left:945.4px;top:658.5px;width:56.6px;height:19.5px;background:#fff;border:1px solid #e4e4e4;border-bottom:1px solid #858585;border-radius:2px;box-sizing:border-box;"></div>
<span class="t" style="left:984.18px;top:661.84px;font-size:12px;line-height:12px;color:#000;letter-spacing:0.059px;">72</span>
<div class="a" style="left:1004.7px;top:659.4px;width:14.3px;height:8.1px;border:1px solid #e0e0e0;box-sizing:border-box;background:#fdfdfd;"></div>
<div class="a" style="left:1004.7px;top:668px;width:14.3px;height:8.4px;border:1px solid #e0e0e0;box-sizing:border-box;background:#fdfdfd;"></div>
<svg class="a" style="left:1009.3px;top:661.5px;" width="5.2" height="3.3" viewBox="0 0 5.2 3.3"><path d="M0 3.3L2.6 0.1L5.2 3.3Z" fill="#1a1a1a"/></svg>
<svg class="a" style="left:1009.3px;top:671.2px;" width="5.2" height="3.3" viewBox="0 0 5.2 3.3"><path d="M0 0L2.6 3.2L5.2 0Z" fill="#1a1a1a"/></svg>
<span class="t" style="left:1024.86px;top:661.84px;font-size:12px;line-height:12px;color:#000;transform:scaleX(1.0746);transform-origin:0 0;">dpi</span>
<div class="a" style="left:727px;top:693.5px;width:353px;height:1px;background:#8c8c8c;"></div>
<span class="t" style="left:726.52px;top:706.84px;font-size:12px;line-height:12px;color:#000;letter-spacing:0.079px;">Print-Engine</span>
<span class="t" style="left:726.52px;top:735.84px;font-size:12px;line-height:12px;color:#000;letter-spacing:-0.170px;">PDF Print-Engine:</span>
<div class="a" style="left:727px;top:756px;width:235px;height:23px;background:#fff;border:1px solid #767676;border-radius:2.5px;box-sizing:border-box;"></div>
<span class="t" style="left:730.18px;top:761.84px;font-size:12px;line-height:12px;color:#000;letter-spacing:-0.209px;">Adobe PDF Print Engine</span>
<svg class="a" style="left:948.6px;top:765.3px;" width="8.5" height="5" viewBox="0 0 8.5 5"><path d="M0.8 0.8 L4.25 4.1 L7.7 0.8" fill="none" stroke="#444" stroke-width="1" stroke-linecap="round" stroke-linejoin="round"/></svg>
<span class="t" style="left:726.52px;top:796.84px;font-size:12px;line-height:12px;color:#000;letter-spacing:-0.157px;">Print-Engine für Bild-EPS/PDF</span>
<div class="a" style="left:727px;top:817px;width:235px;height:23px;background:#fff;border:1px solid #767676;border-radius:2.5px;box-sizing:border-box;"></div>
<span class="t" style="left:729.22px;top:822.84px;font-size:12px;line-height:12px;color:#000;letter-spacing:0.420px;">Nativ</span>
<svg class="a" style="left:948.6px;top:826.3px;" width="8.5" height="5" viewBox="0 0 8.5 5"><path d="M0.8 0.8 L4.25 4.1 L7.7 0.8" fill="none" stroke="#444" stroke-width="1" stroke-linecap="round" stroke-linejoin="round"/></svg>
<div class="a" style="left:702px;top:867px;width:404px;height:38.5px;background:#f2f2f2;"></div>
<svg class="a" style="left:710px;top:884px;" width="10" height="6.2" viewBox="0 0 10 6.2"><path d="M0.8 0.8 L5 5.3 L9.2 0.8" fill="none" stroke="#bcbec9" stroke-width="1.5" stroke-linecap="round" stroke-linejoin="round"/></svg>
<span class="t" style="left:727.48px;top:880.84px;font-size:12px;line-height:12px;color:#5c5a6e;transform:scaleX(0.9171);transform-origin:0 0;">AUFTRÄGE ZUSAMMENFÜHREN</span>
<div class="a" style="left:1066px;top:880px;width:13px;height:13px;background:#fff;border:1px solid #55555f;border-radius:3px;box-sizing:border-box;"></div>
<div class="a" style="left:727px;top:915px;width:13px;height:13px;background:#fff;border:1px solid #c2c2c2;border-radius:50%;box-sizing:border-box;"></div>
<span class="t" style="left:742.52px;top:915.84px;font-size:12px;line-height:12px;color:#5a5568;letter-spacing:0.043px;">Masterauftrag</span>
<div class="a" style="left:727px;top:937px;width:13px;height:13px;background:#fff;border:4px solid #bdbdbd;border-radius:50%;box-sizing:border-box;"></div>
<span class="t" style="left:742.39px;top:937.84px;font-size:12px;line-height:12px;color:#5a5568;letter-spacing:0.074px;">Inhaltsauftrag</span>
<span class="t" style="left:741.52px;top:959.84px;font-size:12px;line-height:12px;color:#8d8d8d;letter-spacing:0.012px;">Masterauftrag zuordnen</span>
<div class="a" style="left:742px;top:979px;width:235px;height:23px;background:#f0f0f0;border:1px solid #c6c6c6;border-radius:2px;box-sizing:border-box;"></div>
<div class="a" style="left:957.5px;top:980px;width:18.5px;height:21px;background:#fff;"></div>
<span class="t" style="left:744.22px;top:984.84px;font-size:12px;line-height:12px;color:#5a5568;letter-spacing:-0.121px;">Keine</span>
<svg class="a" style="left:964.4px;top:988.3px;" width="8.5" height="5" viewBox="0 0 8.5 5"><path d="M0.8 0.8 L4.25 4.1 L7.7 0.8" fill="none" stroke="#c0c0c0" stroke-width="1" stroke-linecap="round" stroke-linejoin="round"/></svg>
<div class="a" style="left:1123px;top:97px;width:49px;height:930px;background:#282c38;"></div>
<div class="a" style="left:1123px;top:97px;width:49px;height:48px;background:#6aabee;"></div>
<svg class="a" style="left:1138.6px;top:110px;" width="19.6" height="22" viewBox="0 0 19.6 22"><path d="M0 0H13.4L19.6 6.2V22H0Z" fill="#fff"/><path d="M13.4 0V6.2H19.6Z" fill="#6aabee"/><path d="M13.9 0.5L19.1 5.7V6.7H12.9V0.5Z" fill="#d9e9fb"/><path d="M3.4 11.3H16.2M3.4 14.6H16.2M3.4 17.9H16.2" stroke="#6aabee" stroke-width="1"/></svg>
<svg class="a" style="left:1136.4px;top:158px;" width="23" height="23" viewBox="0 0 23 23"><g fill="none" stroke="#d9dbe0" stroke-width="1.3"><rect x="0.7" y="0.7" width="7.2" height="21.6"/><rect x="10.6" y="0.7" width="11.6" height="12.6"/><rect x="10.6" y="16.4" width="11.6" height="5.9"/></g></svg>
<svg class="a" style="left:1136px;top:205px;" width="24" height="24" viewBox="0 0 24 24"><g fill="none" stroke="#d9dbe0" stroke-width="1.3"><rect x="6.4" y="6.4" width="11.2" height="11.2"/><path d="M9 9.8H15M9 12H15M9 14.2H15" stroke-width="0.9"/><path d="M5 0.5V4M19 0.5V4M5 20V23.5M19 20V23.5M0.5 5.6H4M20 5.6H23.5M0.5 18H4M20 18H23.5" stroke-width="1.6"/></g></svg>
<svg class="a" style="left:1135.6px;top:253px;" width="25" height="24" viewBox="0 0 25 24"><g fill="none" stroke="#d9dbe0" stroke-width="1.3"><path d="M12 0.8C5.6 0.8 0.8 5.6 0.8 12C0.8 18.6 6 23.2 11.4 23.2C14.8 23.2 16 21 14.6 18.8C13 16.4 12.4 15 14.4 14.2C16 13.6 18.4 16.6 22 14.6C24 13.4 24.2 11 24.2 10C24.2 4.8 18.6 0.8 12 0.8Z"/><circle cx="6" cy="14" r="2"/><circle cx="7.2" cy="8" r="2"/><circle cx="12.4" cy="5.4" r="2"/><circle cx="18" cy="8" r="2"/></g></svg>
<svg class="a" style="left:1135.6px;top:302px;" width="25" height="23.5" viewBox="0 0 25 23.5"><g fill="none" stroke="#d9dbe0" stroke-width="1.3"><rect x="0.7" y="5.6" width="23.6" height="11"/><rect x="7" y="13.6" width="11" height="9" fill="#282c38"/></g><rect x="6.6" y="0" width="11.8" height="2.6" fill="#d9dbe0"/><rect x="3.6" y="8.2" width="2.8" height="2.8" fill="#d9dbe0"/></svg>
<svg class="a" style="left:1138.8px;top:350px;" width="19.4" height="22" viewBox="0 0 19.4 22"><g fill="none" stroke="#d9dbe0" stroke-width="1.3"><path d="M0.7 0.7H13.4L18.7 6V21.3H0.7Z"/><path d="M13.4 0.7V6H18.7"/><path d="M4.8 14L8 17L14.4 10.6" stroke-width="1.8"/></g></svg>
<div class="a" style="left:0px;top:1027px;width:1172.5px;height:29px;background:#4b5064;border-radius:0 0 8px 8px;"></div>
<span class="t" style="left:29.95px;top:1036.04px;font-size:12px;line-height:12px;color:#e6e7ec;letter-spacing:0.164px;">Verbunden mit:</span>
<span class="t" style="left:117.67px;top:1036.04px;font-size:12px;line-height:12px;color:#e6e7ec;transform:scaleX(0.9105);transform-origin:0 0;">127.0.0.1</span>
<div class="a" style="left:188px;top:1027px;width:1px;height:29px;background:#5d6275;"></div>
<span class="t" style="left:249.48px;top:1036.04px;font-size:12px;line-height:12px;color:#e6e7ec;letter-spacing:-0.066px;">Auftragsstatus:</span>
<span class="t" style="left:333.70px;top:1036.04px;font-size:12px;line-height:12px;color:#e6e7ec;letter-spacing:0.027px;">Geprüft</span>
<div class="a" style="left:440px;top:1027px;width:1px;height:29px;background:#5d6275;"></div>
<svg class="a" style="left:527.5px;top:1036.5px;" width="11" height="11" viewBox="0 0 11 11"><rect x="0" y="0" width="2" height="11" fill="#9c9faa"/><path d="M10.6 0V11L3 5.5Z" fill="#9c9faa"/></svg>
<svg class="a" style="left:562.5px;top:1036.5px;" width="8.4" height="11" viewBox="0 0 8.4 11"><path d="M8.4 0V11L0.4 5.5Z" fill="#9c9faa"/></svg>
<div class="a" style="left:582.3px;top:1030px;width:44.5px;height:22.5px;background:#fff;border-radius:2px;"></div>
<span class="t" style="left:614.65px;top:1035.42px;font-size:12.5px;line-height:12.5px;color:#000;">1</span>
<span class="t" style="left:627.00px;top:1036.14px;font-size:12px;line-height:12px;color:#d5d6dc;letter-spacing:0.270px;">/1</span>
<svg class="a" style="left:650px;top:1036.5px;" width="8.4" height="11" viewBox="0 0 8.4 11"><path d="M0 0V11L8 5.5Z" fill="#9c9faa"/></svg>
<svg class="a" style="left:681.5px;top:1036.5px;" width="11" height="11" viewBox="0 0 11 11"><rect x="9" y="0" width="2" height="11" fill="#9c9faa"/><path d="M0.4 0V11L8 5.5Z" fill="#9c9faa"/></svg>
<div class="a" style="left:785px;top:1027px;width:1px;height:29px;background:#5d6275;"></div>
<svg class="a" style="left:796.5px;top:1034.8px;" width="14.8" height="14.2" viewBox="0 0 14.8 14.2"><g fill="#c8c9d1"><path d="M0 0H4.6L0 4.6Z"/><path d="M14.8 0H10.2L14.8 4.6Z"/><path d="M0 14.2H4.6L0 9.6Z"/><path d="M14.8 14.2H10.2L14.8 9.6Z"/></g><path d="M1.4 1.4L5.4 5.2M13.4 1.4L9.4 5.2M1.4 12.8L5.4 9M13.4 12.8L9.4 9" stroke="#c8c9d1" stroke-width="1.7"/></svg>
<span class="t" style="left:827.20px;top:1034.53px;font-size:14.5px;line-height:14.5px;color:#b9bac3;transform:scaleX(0.7961);transform-origin:0 0;font-weight:bold;font-family:'Liberation Serif',serif;">1:1</span>
<svg class="a" style="left:859.2px;top:1035.3px;" width="14" height="14" viewBox="0 0 14 14"><g fill="none" stroke="#c8c9d1" stroke-width="1.3"><rect x="0.7" y="0.7" width="12.6" height="6.4"/><path d="M0.8 11.2H13.2M3.2 9L0.9 11.2L3.2 13.4M10.8 9L13.1 11.2L10.8 13.4"/></g></svg>
<svg class="a" style="left:889.9px;top:1034.9px;" width="14.2" height="14.2" viewBox="0 0 14.2 14.2"><g fill="none" stroke="#c8c9d1" stroke-width="1.2"><rect x="0.6" y="0.6" width="13.2" height="13.2"/><path d="M3 5.4V3H5.4M3 3L6 6M11.4 5.4V3H9M11.4 3L8.4 6M3 9V11.4H5.4M3 11.4L6 8.4M11.4 9V11.4H9M11.4 11.4L8.4 8.4" stroke-width="1.1"/></g></svg>
<div class="a" style="left:927.8px;top:1040.7px;width:10px;height:2px;background:#d0d1d8;"></div>
<div class="a" style="left:953.7px;top:1040px;width:104.3px;height:4px;background:#e1e1e4;border-radius:2px;"></div>
<svg class="a" style="left:1000.8px;top:1032.8px;" width="11.2" height="19.4" viewBox="0 0 11.2 19.4"><path d="M0 1.5A1.5 1.5 0 0 1 1.5 0H9.7A1.5 1.5 0 0 1 11.2 1.5V14L5.6 19.4L0 14Z" fill="#0a78d8"/></svg>
<div class="a" style="left:1073.8px;top:1040.7px;width:10.4px;height:2px;background:#d0d1d8;"></div>
<div class="a" style="left:1078px;top:1036.5px;width:2px;height:10.4px;background:#d0d1d8;"></div>
<div class="a" style="left:1102px;top:1030px;width:60px;height:23px;background:#fff;"></div>
<span class="t" style="left:1107.75px;top:1034.64px;font-size:12px;line-height:12px;color:#000;transform:scaleX(0.9300);transform-origin:0 0;">100 %</span>
</body></html>
